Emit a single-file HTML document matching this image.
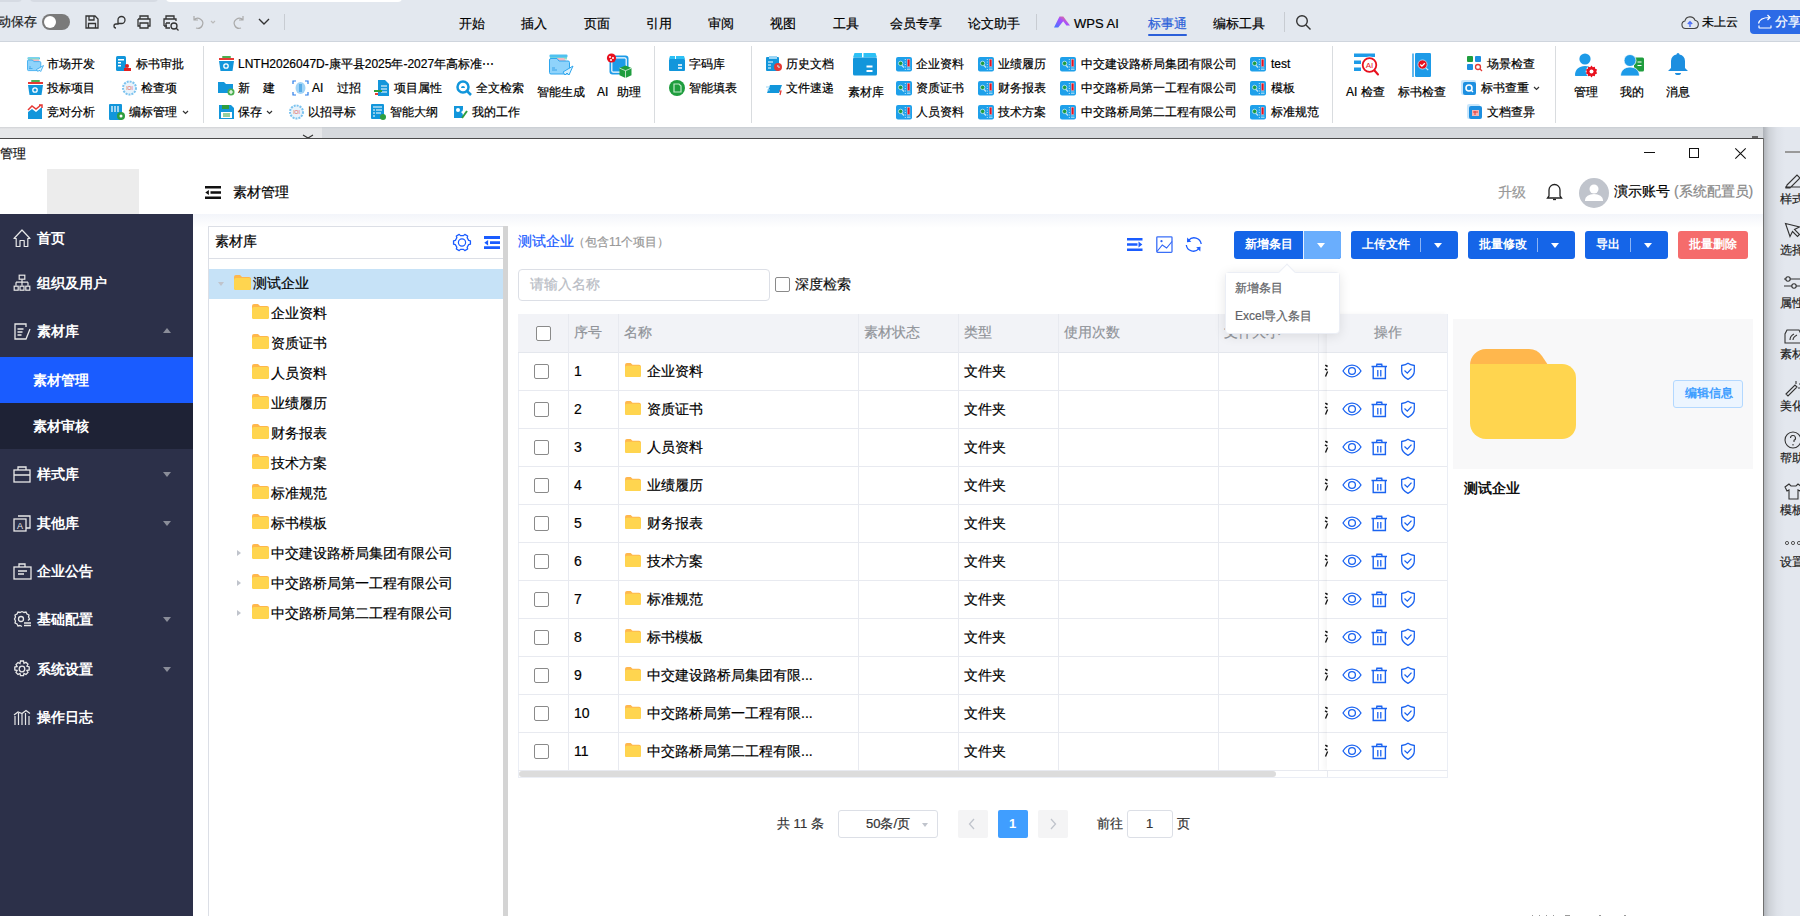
<!DOCTYPE html>
<html><head><meta charset="utf-8">
<style>
*{margin:0;padding:0;box-sizing:border-box}
html,body{width:1800px;height:916px;overflow:hidden;background:#fff;font-family:"Liberation Sans",sans-serif;color:#222}
.a{position:absolute}
.t{position:absolute;white-space:nowrap;line-height:1;-webkit-text-stroke:0.2px currentColor}
svg{overflow:visible}
</style></head><body>
<!-- TOP BAR -->
<div class="a" style="left:0;top:0;width:1800px;height:41px;background:#e3e8ef"></div>
<div class="a" style="left:0;top:41px;width:1800px;height:1px;background:#cfd5dd"></div>
<div class="a" style="left:-10px;top:-8px;width:32px;height:10px;background:#d6dbe3;border-radius:4px"></div>
<div class="a" style="left:30px;top:-8px;width:128px;height:10px;background:#d6dbe3;border-radius:4px"></div>
<div class="a" style="left:166px;top:-8px;width:236px;height:10px;background:#fff;border-radius:4px"></div>
<div class="t" style="left:-2px;top:15px;font-size:13px;color:#222">动保存</div>
<div class="a" style="left:42px;top:14px;width:28px;height:16px;border-radius:8px;background:#7a7a7a"></div>
<div class="a" style="left:44px;top:16px;width:12px;height:12px;border-radius:6px;background:#fff"></div>
<svg class="a" style="left:84px;top:14px" width="16" height="16" viewBox="0 0 16 16" fill="none" stroke="#333" stroke-width="1.3"><path d="M2 2h9l3 3v9H2z M5 2v4h5V2 M4.5 14v-4.5h7V14"/></svg>
<svg class="a" style="left:110px;top:14px" width="16" height="16" viewBox="0 0 16 16" fill="none" stroke="#333" stroke-width="1.3"><path d="M6 14a2 2 0 1 1 0-4h2V6a3.5 3.5 0 1 1 3.5 3.5H8"/></svg>
<svg class="a" style="left:136px;top:14px" width="16" height="16" viewBox="0 0 16 16" fill="none" stroke="#333" stroke-width="1.3"><path d="M4 5V2h8v3 M2 5h12v7h-2 M4 12H2V5 M4 9h8v5H4z"/></svg>
<svg class="a" style="left:162px;top:14px" width="18" height="17" viewBox="0 0 18 17" fill="none" stroke="#333" stroke-width="1.3"><path d="M4 5V2h8v3 M2 12V5h12v2 M2 12h3 M4 9h4 M4 9v5h4"/><circle cx="12" cy="12" r="3"/><path d="M14 14l2.5 2.5"/></svg>
<svg class="a" style="left:191px;top:14px" width="28" height="16" viewBox="0 0 28 16" fill="none" stroke="#aaa" stroke-width="1.2"><path d="M3 2v4h4 M3 6a5 5 0 1 1 2 8"/><path d="M20 7l2 2 2-2" stroke="#bbb"/></svg>
<svg class="a" style="left:231px;top:14px" width="16" height="16" viewBox="0 0 16 16" fill="none" stroke="#aaa" stroke-width="1.2"><path d="M12 2v4H8 M12 6a5 5 0 1 0-2 8"/></svg>
<svg class="a" style="left:257px;top:17px" width="14" height="10" viewBox="0 0 14 10" fill="none" stroke="#333" stroke-width="1.4"><path d="M2 2l5 5 5-5"/></svg>
<div class="a" style="left:284px;top:14px;width:1px;height:16px;background:#c8ccd2"></div>
<div class="t" style="left:459px;top:16.5px;font-size:13px;color:#000">开始</div>
<div class="t" style="left:521px;top:16.5px;font-size:13px;color:#000">插入</div>
<div class="t" style="left:584px;top:16.5px;font-size:13px;color:#000">页面</div>
<div class="t" style="left:646px;top:16.5px;font-size:13px;color:#000">引用</div>
<div class="t" style="left:708px;top:16.5px;font-size:13px;color:#000">审阅</div>
<div class="t" style="left:770px;top:16.5px;font-size:13px;color:#000">视图</div>
<div class="t" style="left:833px;top:16.5px;font-size:13px;color:#000">工具</div>
<div class="t" style="left:890px;top:16.5px;font-size:13px;color:#000">会员专享</div>
<div class="t" style="left:968px;top:16.5px;font-size:13px;color:#000">论文助手</div>
<div class="a" style="left:1036px;top:14px;width:1px;height:16px;background:#c8ccd2"></div>
<svg class="a" style="left:1054px;top:16px" width="17" height="12" viewBox="0 0 17 12"><defs><linearGradient id="wg" x1="0" x2="1" y1="1" y2="0"><stop offset="0" stop-color="#3d7bff"/><stop offset="0.55" stop-color="#a64dff"/><stop offset="1" stop-color="#ff8a5a"/></linearGradient></defs><path d="M0 11.5L5.5 0.5h3.8L16 9.5h-3.6L9.2 5.2 4.2 11.5z" fill="url(#wg)"/></svg>
<div class="t" style="left:1074px;top:16.5px;font-size:13px;color:#000">WPS AI</div>
<div class="t" style="left:1148px;top:16.5px;font-size:13px;color:#2b5fd9">标事通</div>
<div class="a" style="left:1148px;top:34px;width:39px;height:2px;background:#2b5fd9;border-radius:1px"></div>
<div class="t" style="left:1213px;top:16.5px;font-size:13px;color:#000">编标工具</div>
<div class="a" style="left:1284px;top:12px;width:1px;height:20px;background:#c8ccd2"></div>
<svg class="a" style="left:1295px;top:14px" width="17" height="17" viewBox="0 0 17 17" fill="none" stroke="#333" stroke-width="1.4"><circle cx="7" cy="7" r="5.3"/><path d="M11 11l4.5 4.5"/></svg>
<svg class="a" style="left:1681px;top:14px" width="18" height="16" viewBox="0 0 18 16" fill="none"><path d="M5 14.5H4.5a3.8 3.8 0 0 1-.6-7.5A5.3 5.3 0 0 1 14 6.2a4.2 4.2 0 0 1-.6 8.3z" stroke="#444" stroke-width="1.1"/><path d="M9 13V8 M6.8 10l2.2-2.2 2.2 2.2" stroke="#4a6cf7" stroke-width="1.4"/></svg>
<div class="t" style="left:1702px;top:16px;font-size:12px;color:#000">未上云</div>
<div class="a" style="left:1750px;top:10px;width:60px;height:24px;background:#2c6ae6;border-radius:4px"></div>
<svg class="a" style="left:1757px;top:14px" width="16" height="15" viewBox="0 0 16 15" fill="none" stroke="#fff" stroke-width="1.2"><path d="M2 13.5v-2 M14 11.5v2a.5.5 0 0 1-.5.5h-11a.5.5 0 0 1-.5-.5" /><path d="M1.5 9.5C2.5 5 6 3.5 12.5 3.5 M10.5 1l2.5 2.5-2.5 2.5"/></svg>
<div class="t" style="left:1775px;top:15px;font-size:13px;color:#fff">分享</div>

<!-- RIBBON -->
<div class="a" style="left:0;top:42px;width:1800px;height:85px;background:#fff"></div>
<div class="a" style="left:0;top:127px;width:1800px;height:11px;background:linear-gradient(#c9cdd2,#d6d9dd 2px,#d6d9dd)"></div>
<div class="a" style="left:0;top:127px;width:322px;height:11px;background:linear-gradient(#d0d2d5,#e6e7e9 2px,#e6e7e9)"></div>
<svg class="a" style="left:302px;top:134px" width="12" height="5" viewBox="0 0 12 5"><path d="M1 1l5 3 5-3" fill="none" stroke="#333" stroke-width="1.1"/></svg>
<div class="a" style="left:0;top:138px;width:1764px;height:1px;background:#4a4a4a"></div>

<svg class="a" style="left:27px;top:57px" width="17" height="15" viewBox="0 0 17 15"><rect x="0.5" y="0.3" width="12.5" height="2.2" rx="0.8" fill="#4fc1f0"/><path d="M1 1.2h11v1.5H1z" fill="#8fe0c8"/><path d="M2.5 2.5h9l1.5 2H2.5z" fill="#f4b8c0"/><path d="M0.5 4a1 1 0 0 1 1-1h4l1.3 1.6h6a1 1 0 0 1 1 1v7a1 1 0 0 1-1 1h-11.3a1 1 0 0 1-1-1z" fill="#8fd3fb" stroke="#2ea6ee" stroke-width="0.8"/><path d="M2 10h2 M2 11.5h3.5" stroke="#3aa3e8" stroke-width="0.8"/><path d="M9.5 12.5l7-4-2.8 6-1.4-1.4-1.4 1.4z" fill="#d8f0fd" stroke="#2ea6ee" stroke-width="0.8"/></svg>
<div class="t" style="left:47px;top:57.9px;font-size:12px;color:#000;">市场开发</div>
<svg class="a" style="left:115px;top:56px" width="17" height="16" viewBox="0 0 17 16"><rect x="1" y="0" width="10" height="15" rx="1.5" fill="#1296db"/><rect x="3" y="3" width="6" height="1.5" fill="#fff"/><rect x="3" y="6" width="3" height="1.5" fill="#fff"/><rect x="3" y="9" width="3" height="1.5" fill="#fff"/><circle cx="12" cy="10" r="2" fill="#e02020"/><rect x="9" y="12" width="7" height="3" fill="#e02020"/></svg>
<div class="t" style="left:136px;top:57.9px;font-size:12px;color:#000;">标书审批</div>
<svg class="a" style="left:27px;top:80px" width="17" height="16" viewBox="0 0 17 16"><rect x="4" y="0" width="9" height="2" rx="1" fill="#4caf50"/><rect x="1" y="2" width="15" height="2" fill="#e53935"/><path d="M1 5h15l-1.5 10h-12z" fill="#1296db"/><circle cx="8" cy="10" r="2.2" fill="none" stroke="#fff" stroke-width="1.3"/></svg>
<div class="t" style="left:47px;top:81.9px;font-size:12px;color:#000;">投标项目</div>
<svg class="a" style="left:121px;top:80px" width="17" height="16" viewBox="0 0 17 16"><circle cx="8.5" cy="8" r="6.5" fill="#e8f3fb" stroke="#7cc3ef" stroke-width="2" stroke-dasharray="2 1"/><text x="8.5" y="10" font-size="5" fill="#e05050" text-anchor="middle" font-family="Liberation Sans">IOI</text></svg>
<div class="t" style="left:141px;top:81.9px;font-size:12px;color:#000;">检查项</div>
<svg class="a" style="left:27px;top:104px" width="17" height="16" viewBox="0 0 17 16"><path d="M1 15V8l4-3 4 3 6-5v12z" fill="#1296db"/><path d="M1 6l4-4 4 3 5-4 M12 1h3v3" fill="none" stroke="#e53935" stroke-width="1.5"/></svg>
<div class="t" style="left:47px;top:105.9px;font-size:12px;color:#000;">竞对分析</div>
<svg class="a" style="left:109px;top:104px" width="17" height="17" viewBox="0 0 17 17"><rect x="0" y="0" width="13" height="16" rx="1" fill="#1296db"/><path d="M3 2v6 M6 2v6 M9 2v6" stroke="#fff" stroke-width="1.2"/><circle cx="12" cy="12" r="4" fill="#2e9e3e"/><circle cx="12" cy="12" r="1.5" fill="#fff"/></svg>
<div class="t" style="left:129px;top:105.9px;font-size:12px;color:#000;">编标管理</div>
<svg class="a" style="left:182px;top:110px" width="7" height="5" viewBox="0 0 7 5"><path d="M1 1l2.5 2.5L6 1" fill="none" stroke="#333" stroke-width="1.2"/></svg>
<div class="a" style="left:203px;top:46px;width:1px;height:77px;background:#d9dcdf"></div>
<svg class="a" style="left:218px;top:56px" width="17" height="16" viewBox="0 0 17 16"><rect x="4" y="0" width="9" height="2" rx="1" fill="#4caf50"/><rect x="1" y="2" width="15" height="2" fill="#e53935"/><path d="M1 5h15l-1.5 10h-12z" fill="#1296db"/><circle cx="8" cy="10" r="2.2" fill="none" stroke="#fff" stroke-width="1.3"/></svg>
<div class="t" style="left:238px;top:57.9px;font-size:12px;color:#000;">LNTH2026047D-康平县2025年-2027年高标准⋯</div>
<svg class="a" style="left:218px;top:80px" width="17" height="16" viewBox="0 0 17 16"><path d="M0 2h6l2 2h7v9H0z" fill="#1296db"/><circle cx="13" cy="12" r="3.5" fill="#4caf50"/><path d="M13 10v4 M11 12h4" stroke="#fff" stroke-width="1.2"/></svg>
<div class="t" style="left:238px;top:81.9px;font-size:12px;color:#000;">新&nbsp;&nbsp;&nbsp;&nbsp;建</div>
<svg class="a" style="left:292px;top:80px" width="17" height="16" viewBox="0 0 17 16"><path d="M1 4V1h3 M13 1h3v3 M16 12v3h-3 M4 15H1v-3" fill="none" stroke="#2b7de9" stroke-width="1.2"/><ellipse cx="8.5" cy="8" rx="5" ry="6" fill="#9fd3f7"/><rect x="7" y="4" width="3" height="8" fill="#5aaee8"/></svg>
<div class="t" style="left:312px;top:81.9px;font-size:12px;color:#000;">AI&nbsp;&nbsp;&nbsp;&nbsp;过招</div>
<svg class="a" style="left:374px;top:80px" width="17" height="16" viewBox="0 0 17 16"><path d="M4 0h7l4 4v12H4z" fill="#1296db"/><path d="M7 6h6 M7 9h6 M7 12h6" stroke="#fff" stroke-width="1.2"/><rect x="0" y="10" width="8" height="2" fill="#2e9e3e"/><rect x="1" y="13" width="3" height="2" fill="#e53935"/></svg>
<div class="t" style="left:394px;top:81.9px;font-size:12px;color:#000;">项目属性</div>
<svg class="a" style="left:456px;top:80px" width="17" height="16" viewBox="0 0 17 16"><circle cx="7" cy="7" r="5.5" fill="#fff" stroke="#1296db" stroke-width="2.5"/><path d="M5 8a2 2 0 0 1 4 0z" fill="#1296db"/><path d="M11 11l4 4" stroke="#1296db" stroke-width="2.5"/></svg>
<div class="t" style="left:476px;top:81.9px;font-size:12px;color:#000;">全文检索</div>
<svg class="a" style="left:218px;top:104px" width="17" height="16" viewBox="0 0 17 16"><path d="M1 1h12l3 3v11H1z" fill="#1296db"/><rect x="4" y="1" width="7" height="4" fill="#2e9e3e"/><rect x="3" y="8" width="11" height="6" fill="#fff"/><path d="M5 10h7 M5 12h7" stroke="#2e9e3e" stroke-width="1"/></svg>
<div class="t" style="left:238px;top:105.9px;font-size:12px;color:#000;">保存</div>
<svg class="a" style="left:266px;top:110px" width="7" height="5" viewBox="0 0 7 5"><path d="M1 1l2.5 2.5L6 1" fill="none" stroke="#333" stroke-width="1.2"/></svg>
<svg class="a" style="left:288px;top:104px" width="17" height="16" viewBox="0 0 17 16"><circle cx="8.5" cy="8" r="6.5" fill="#e8f3fb" stroke="#7cc3ef" stroke-width="2" stroke-dasharray="2 1"/><text x="8.5" y="10" font-size="5" fill="#e05050" text-anchor="middle" font-family="Liberation Sans">IOI</text></svg>
<div class="t" style="left:308px;top:105.9px;font-size:12px;color:#000;">以招寻标</div>
<svg class="a" style="left:370px;top:104px" width="17" height="16" viewBox="0 0 17 16"><rect x="1" y="0" width="13" height="15" rx="1" fill="#1296db"/><path d="M3 3h9 M3 6h2 M6 6h6 M3 9h2 M6 9h5 M3 12h2" stroke="#fff" stroke-width="1.2"/><circle cx="13" cy="13" r="3" fill="#2e9e3e"/></svg>
<div class="t" style="left:390px;top:105.9px;font-size:12px;color:#000;">智能大纲</div>
<svg class="a" style="left:452px;top:104px" width="17" height="16" viewBox="0 0 17 16"><path d="M2 2h9v3a3 3 0 0 1-2 3 4 4 0 0 1 2 4v2H2z" fill="#1296db"/><circle cx="6" cy="6" r="2" fill="#fff"/><path d="M10 14l5-7" stroke="#2e9e3e" stroke-width="2"/></svg>
<div class="t" style="left:472px;top:105.9px;font-size:12px;color:#000;">我的工作</div>
<svg class="a" style="left:549px;top:54px" width="25" height="23" viewBox="0 0 25 23"><path d="M1 1.5h17v4H1z" fill="#8fe0c8"/><rect x="0.5" y="0.5" width="18" height="3" rx="1" fill="#4fc1f0"/><path d="M3 4h12l2 3H3z" fill="#f4b8c0"/><path d="M0.5 6a1.5 1.5 0 0 1 1.5-1.5h6l2 2.5h9a1.5 1.5 0 0 1 1.5 1.5v10a1.5 1.5 0 0 1-1.5 1.5H2A1.5 1.5 0 0 1 .5 18.5z" fill="#8fd3fb" stroke="#2ea6ee" stroke-width="1"/><path d="M3 14h3 M3 16h5" stroke="#3aa3e8" stroke-width="1"/><path d="M14 18l10-6-4 9-2-2-2 2z" fill="#d8f0fd" stroke="#2ea6ee" stroke-width="1"/></svg>
<div class="t" style="left:537px;top:85.9px;font-size:12px;color:#000;">智能生成</div>
<svg class="a" style="left:606px;top:53px" width="26" height="25" viewBox="0 0 26 25"><rect x="3.5" y="2.5" width="19" height="19" rx="3" fill="#1d9be8"/><rect x="5.8" y="4.8" width="14.4" height="14.4" rx="1.5" fill="none" stroke="#fff" stroke-width="1.2"/><circle cx="5.5" cy="5" r="4.6" fill="#e8101e"/><circle cx="4" cy="4" r="1" fill="#fff"/><circle cx="7" cy="5" r="1" fill="#fff"/><circle cx="5" cy="7" r="1" fill="#fff"/><path d="M19.5 12.5l6 2.6v7.2l-6 2.7-6-2.7v-7.2z" fill="#1f9d3e"/><path d="M13.5 15.1l6 2.6 6-2.6 M19.5 17.7v7.3" stroke="#fff" stroke-width="0.7" fill="none"/></svg>
<div class="t" style="left:597px;top:85.9px;font-size:12px;color:#000;">AI</div>
<div class="t" style="left:617px;top:85.9px;font-size:12px;color:#000;">助理</div>
<div class="a" style="left:654px;top:46px;width:1px;height:77px;background:#d9dcdf"></div>
<svg class="a" style="left:669px;top:56px" width="16" height="16" viewBox="0 0 16 16"><path d="M0 3l1-3h5v3z M7 3V0h8l1 3z" fill="#2cc0f5"/><rect x="0" y="3" width="16" height="12" rx="1" fill="#1296db"/><path d="M9 9h4 M9 12h4" stroke="#fff" stroke-width="1.3"/></svg>
<div class="t" style="left:689px;top:57.9px;font-size:12px;color:#000;">字码库</div>
<svg class="a" style="left:669px;top:80px" width="17" height="16" viewBox="0 0 17 16"><circle cx="8" cy="8" r="8" fill="#1f9d3e"/><path d="M5 4h5l2 2v6H5z" fill="none" stroke="#bfe9c8" stroke-width="1.2"/></svg>
<div class="t" style="left:689px;top:81.9px;font-size:12px;color:#000;">智能填表</div>
<div class="a" style="left:751px;top:46px;width:1px;height:77px;background:#d9dcdf"></div>
<svg class="a" style="left:766px;top:56px" width="17" height="16" viewBox="0 0 17 16"><rect x="0" y="1" width="13" height="14" rx="1" fill="#1296db"/><rect x="3" y="0" width="8" height="3" fill="#9ad5f5"/><path d="M2 6h5 M2 9h3 M2 12h3" stroke="#fff" stroke-width="1.2"/><circle cx="12" cy="11" r="4" fill="#e53935"/><path d="M12 9v2h2" stroke="#fff" stroke-width="1"/></svg>
<div class="t" style="left:786px;top:57.9px;font-size:12px;color:#000;">历史文档</div>
<svg class="a" style="left:766px;top:80px" width="17" height="16" viewBox="0 0 17 16"><path d="M4 5h12l-3 8H1z" fill="#1296db"/><path d="M0 7h4 M1 10h3" stroke="#9ad5f5" stroke-width="1"/><path d="M13 11l2 0-1 4" stroke="#e53935" stroke-width="1.2" fill="none"/></svg>
<div class="t" style="left:786px;top:81.9px;font-size:12px;color:#000;">文件速递</div>
<svg class="a" style="left:853px;top:53px" width="24" height="24" viewBox="0 0 16 16"><path d="M0 3l1-3h5v3z M7 3V0h8l1 3z" fill="#2cc0f5"/><rect x="0" y="3" width="16" height="12" rx="1" fill="#1296db"/><path d="M9 9h4 M9 12h4" stroke="#fff" stroke-width="1.2"/></svg>
<div class="t" style="left:848px;top:85.9px;font-size:12px;color:#000;">素材库</div>
<svg class="a" style="left:896px;top:56.5px" width="17" height="15" viewBox="0 0 17 15"><rect x="0" y="0" width="16" height="14.5" rx="2" fill="#1ea0ea"/><path d="M5.5 8l2.5 2.5" stroke="#bfe6f7" stroke-width="1.3"/><circle cx="4.6" cy="6.4" r="2.2" fill="#1f9d3e" stroke="#bfe6f7" stroke-width="0.8"/><path d="M9.3 2v1 M9.3 4.5v1 M9.3 7v1 M9.3 9.5v1 M9.3 12v1" stroke="#d7f0fb" stroke-width="0.9"/><rect x="11.3" y="2.2" width="2.6" height="7.3" fill="#e8101e" stroke="#f6c3c6" stroke-width="0.5"/><path d="M11 11h3.5 M11 12.5h3.5" stroke="#bfe6f7" stroke-width="0.7"/></svg>
<div class="t" style="left:916px;top:57.9px;font-size:12px;color:#000;">企业资料</div>
<svg class="a" style="left:896px;top:80.5px" width="17" height="15" viewBox="0 0 17 15"><rect x="0" y="0" width="16" height="14.5" rx="2" fill="#1ea0ea"/><path d="M5.5 8l2.5 2.5" stroke="#bfe6f7" stroke-width="1.3"/><circle cx="4.6" cy="6.4" r="2.2" fill="#1f9d3e" stroke="#bfe6f7" stroke-width="0.8"/><path d="M9.3 2v1 M9.3 4.5v1 M9.3 7v1 M9.3 9.5v1 M9.3 12v1" stroke="#d7f0fb" stroke-width="0.9"/><rect x="11.3" y="2.2" width="2.6" height="7.3" fill="#e8101e" stroke="#f6c3c6" stroke-width="0.5"/><path d="M11 11h3.5 M11 12.5h3.5" stroke="#bfe6f7" stroke-width="0.7"/></svg>
<div class="t" style="left:916px;top:81.9px;font-size:12px;color:#000;">资质证书</div>
<svg class="a" style="left:896px;top:104.5px" width="17" height="15" viewBox="0 0 17 15"><rect x="0" y="0" width="16" height="14.5" rx="2" fill="#1ea0ea"/><path d="M5.5 8l2.5 2.5" stroke="#bfe6f7" stroke-width="1.3"/><circle cx="4.6" cy="6.4" r="2.2" fill="#1f9d3e" stroke="#bfe6f7" stroke-width="0.8"/><path d="M9.3 2v1 M9.3 4.5v1 M9.3 7v1 M9.3 9.5v1 M9.3 12v1" stroke="#d7f0fb" stroke-width="0.9"/><rect x="11.3" y="2.2" width="2.6" height="7.3" fill="#e8101e" stroke="#f6c3c6" stroke-width="0.5"/><path d="M11 11h3.5 M11 12.5h3.5" stroke="#bfe6f7" stroke-width="0.7"/></svg>
<div class="t" style="left:916px;top:105.9px;font-size:12px;color:#000;">人员资料</div>
<svg class="a" style="left:978px;top:56.5px" width="17" height="15" viewBox="0 0 17 15"><rect x="0" y="0" width="16" height="14.5" rx="2" fill="#1ea0ea"/><path d="M5.5 8l2.5 2.5" stroke="#bfe6f7" stroke-width="1.3"/><circle cx="4.6" cy="6.4" r="2.2" fill="#1f9d3e" stroke="#bfe6f7" stroke-width="0.8"/><path d="M9.3 2v1 M9.3 4.5v1 M9.3 7v1 M9.3 9.5v1 M9.3 12v1" stroke="#d7f0fb" stroke-width="0.9"/><rect x="11.3" y="2.2" width="2.6" height="7.3" fill="#e8101e" stroke="#f6c3c6" stroke-width="0.5"/><path d="M11 11h3.5 M11 12.5h3.5" stroke="#bfe6f7" stroke-width="0.7"/></svg>
<div class="t" style="left:998px;top:57.9px;font-size:12px;color:#000;">业绩履历</div>
<svg class="a" style="left:978px;top:80.5px" width="17" height="15" viewBox="0 0 17 15"><rect x="0" y="0" width="16" height="14.5" rx="2" fill="#1ea0ea"/><path d="M5.5 8l2.5 2.5" stroke="#bfe6f7" stroke-width="1.3"/><circle cx="4.6" cy="6.4" r="2.2" fill="#1f9d3e" stroke="#bfe6f7" stroke-width="0.8"/><path d="M9.3 2v1 M9.3 4.5v1 M9.3 7v1 M9.3 9.5v1 M9.3 12v1" stroke="#d7f0fb" stroke-width="0.9"/><rect x="11.3" y="2.2" width="2.6" height="7.3" fill="#e8101e" stroke="#f6c3c6" stroke-width="0.5"/><path d="M11 11h3.5 M11 12.5h3.5" stroke="#bfe6f7" stroke-width="0.7"/></svg>
<div class="t" style="left:998px;top:81.9px;font-size:12px;color:#000;">财务报表</div>
<svg class="a" style="left:978px;top:104.5px" width="17" height="15" viewBox="0 0 17 15"><rect x="0" y="0" width="16" height="14.5" rx="2" fill="#1ea0ea"/><path d="M5.5 8l2.5 2.5" stroke="#bfe6f7" stroke-width="1.3"/><circle cx="4.6" cy="6.4" r="2.2" fill="#1f9d3e" stroke="#bfe6f7" stroke-width="0.8"/><path d="M9.3 2v1 M9.3 4.5v1 M9.3 7v1 M9.3 9.5v1 M9.3 12v1" stroke="#d7f0fb" stroke-width="0.9"/><rect x="11.3" y="2.2" width="2.6" height="7.3" fill="#e8101e" stroke="#f6c3c6" stroke-width="0.5"/><path d="M11 11h3.5 M11 12.5h3.5" stroke="#bfe6f7" stroke-width="0.7"/></svg>
<div class="t" style="left:998px;top:105.9px;font-size:12px;color:#000;">技术方案</div>
<svg class="a" style="left:1060px;top:56.5px" width="17" height="15" viewBox="0 0 17 15"><rect x="0" y="0" width="16" height="14.5" rx="2" fill="#1ea0ea"/><path d="M5.5 8l2.5 2.5" stroke="#bfe6f7" stroke-width="1.3"/><circle cx="4.6" cy="6.4" r="2.2" fill="#1f9d3e" stroke="#bfe6f7" stroke-width="0.8"/><path d="M9.3 2v1 M9.3 4.5v1 M9.3 7v1 M9.3 9.5v1 M9.3 12v1" stroke="#d7f0fb" stroke-width="0.9"/><rect x="11.3" y="2.2" width="2.6" height="7.3" fill="#e8101e" stroke="#f6c3c6" stroke-width="0.5"/><path d="M11 11h3.5 M11 12.5h3.5" stroke="#bfe6f7" stroke-width="0.7"/></svg>
<div class="t" style="left:1081px;top:57.9px;font-size:12px;color:#000;">中交建设路桥局集团有限公司</div>
<svg class="a" style="left:1060px;top:80.5px" width="17" height="15" viewBox="0 0 17 15"><rect x="0" y="0" width="16" height="14.5" rx="2" fill="#1ea0ea"/><path d="M5.5 8l2.5 2.5" stroke="#bfe6f7" stroke-width="1.3"/><circle cx="4.6" cy="6.4" r="2.2" fill="#1f9d3e" stroke="#bfe6f7" stroke-width="0.8"/><path d="M9.3 2v1 M9.3 4.5v1 M9.3 7v1 M9.3 9.5v1 M9.3 12v1" stroke="#d7f0fb" stroke-width="0.9"/><rect x="11.3" y="2.2" width="2.6" height="7.3" fill="#e8101e" stroke="#f6c3c6" stroke-width="0.5"/><path d="M11 11h3.5 M11 12.5h3.5" stroke="#bfe6f7" stroke-width="0.7"/></svg>
<div class="t" style="left:1081px;top:81.9px;font-size:12px;color:#000;">中交路桥局第一工程有限公司</div>
<svg class="a" style="left:1060px;top:104.5px" width="17" height="15" viewBox="0 0 17 15"><rect x="0" y="0" width="16" height="14.5" rx="2" fill="#1ea0ea"/><path d="M5.5 8l2.5 2.5" stroke="#bfe6f7" stroke-width="1.3"/><circle cx="4.6" cy="6.4" r="2.2" fill="#1f9d3e" stroke="#bfe6f7" stroke-width="0.8"/><path d="M9.3 2v1 M9.3 4.5v1 M9.3 7v1 M9.3 9.5v1 M9.3 12v1" stroke="#d7f0fb" stroke-width="0.9"/><rect x="11.3" y="2.2" width="2.6" height="7.3" fill="#e8101e" stroke="#f6c3c6" stroke-width="0.5"/><path d="M11 11h3.5 M11 12.5h3.5" stroke="#bfe6f7" stroke-width="0.7"/></svg>
<div class="t" style="left:1081px;top:105.9px;font-size:12px;color:#000;">中交路桥局第二工程有限公司</div>
<svg class="a" style="left:1250px;top:56.5px" width="17" height="15" viewBox="0 0 17 15"><rect x="0" y="0" width="16" height="14.5" rx="2" fill="#1ea0ea"/><path d="M5.5 8l2.5 2.5" stroke="#bfe6f7" stroke-width="1.3"/><circle cx="4.6" cy="6.4" r="2.2" fill="#1f9d3e" stroke="#bfe6f7" stroke-width="0.8"/><path d="M9.3 2v1 M9.3 4.5v1 M9.3 7v1 M9.3 9.5v1 M9.3 12v1" stroke="#d7f0fb" stroke-width="0.9"/><rect x="11.3" y="2.2" width="2.6" height="7.3" fill="#e8101e" stroke="#f6c3c6" stroke-width="0.5"/><path d="M11 11h3.5 M11 12.5h3.5" stroke="#bfe6f7" stroke-width="0.7"/></svg>
<div class="t" style="left:1271px;top:57.9px;font-size:12px;color:#000;">test</div>
<svg class="a" style="left:1250px;top:80.5px" width="17" height="15" viewBox="0 0 17 15"><rect x="0" y="0" width="16" height="14.5" rx="2" fill="#1ea0ea"/><path d="M5.5 8l2.5 2.5" stroke="#bfe6f7" stroke-width="1.3"/><circle cx="4.6" cy="6.4" r="2.2" fill="#1f9d3e" stroke="#bfe6f7" stroke-width="0.8"/><path d="M9.3 2v1 M9.3 4.5v1 M9.3 7v1 M9.3 9.5v1 M9.3 12v1" stroke="#d7f0fb" stroke-width="0.9"/><rect x="11.3" y="2.2" width="2.6" height="7.3" fill="#e8101e" stroke="#f6c3c6" stroke-width="0.5"/><path d="M11 11h3.5 M11 12.5h3.5" stroke="#bfe6f7" stroke-width="0.7"/></svg>
<div class="t" style="left:1271px;top:81.9px;font-size:12px;color:#000;">模板</div>
<svg class="a" style="left:1250px;top:104.5px" width="17" height="15" viewBox="0 0 17 15"><rect x="0" y="0" width="16" height="14.5" rx="2" fill="#1ea0ea"/><path d="M5.5 8l2.5 2.5" stroke="#bfe6f7" stroke-width="1.3"/><circle cx="4.6" cy="6.4" r="2.2" fill="#1f9d3e" stroke="#bfe6f7" stroke-width="0.8"/><path d="M9.3 2v1 M9.3 4.5v1 M9.3 7v1 M9.3 9.5v1 M9.3 12v1" stroke="#d7f0fb" stroke-width="0.9"/><rect x="11.3" y="2.2" width="2.6" height="7.3" fill="#e8101e" stroke="#f6c3c6" stroke-width="0.5"/><path d="M11 11h3.5 M11 12.5h3.5" stroke="#bfe6f7" stroke-width="0.7"/></svg>
<div class="t" style="left:1271px;top:105.9px;font-size:12px;color:#000;">标准规范</div>
<div class="a" style="left:1332px;top:46px;width:1px;height:77px;background:#d9dcdf"></div>
<svg class="a" style="left:1353px;top:53px" width="26" height="24" viewBox="0 0 26 24"><path d="M1 0.5h21v3.5H1z M1 7.5h7v3.5H1z M1 14.5h7v3.5H1z" fill="#1d9be8"/><circle cx="16.5" cy="12" r="8.5" fill="#fff"/><circle cx="16.5" cy="12" r="6.8" fill="#fff" stroke="#e8101e" stroke-width="1.8"/><text x="16.5" y="15" font-size="8" fill="#e8101e" text-anchor="middle" font-family="Liberation Sans">AI</text><path d="M21.5 17.5l3.5 4" stroke="#e8101e" stroke-width="2" stroke-linecap="round"/></svg>
<div class="t" style="left:1346px;top:85.9px;font-size:12px;color:#000;">AI&nbsp;检查</div>
<svg class="a" style="left:1412px;top:53px" width="20" height="25" viewBox="0 0 20 25"><rect x="0.3" y="0.5" width="1.4" height="23.5" fill="#1d9be8"/><rect x="3" y="0" width="16" height="24" rx="1.2" fill="#1d9be8"/><circle cx="10.5" cy="11.5" r="4.6" fill="#e8101e" stroke="#bfe3f7" stroke-width="0.8"/><path d="M8.3 11.5l1.6 1.6 2.9-2.9" stroke="#fff" stroke-width="1.3" fill="none"/><path d="M13.8 14.8l2.4 2.4" stroke="#d7f0fb" stroke-width="1.2"/></svg>
<div class="t" style="left:1398px;top:85.9px;font-size:12px;color:#000;">标书检查</div>
<svg class="a" style="left:1467px;top:56px" width="16" height="16" viewBox="0 0 16 16"><rect x="0" y="0" width="6" height="6" rx="1" fill="#1f9d3e"/><rect x="8" y="0" width="6" height="6" rx="1" fill="#1d8fe0"/><rect x="0" y="8" width="6" height="6" rx="1" fill="#1d8fe0"/><circle cx="11" cy="11" r="2.5" fill="none" stroke="#e53935" stroke-width="1.3"/><path d="M13 13l2 2" stroke="#e53935" stroke-width="1.3"/></svg>
<div class="t" style="left:1487px;top:57.9px;font-size:12px;color:#000;">场景检查</div>
<svg class="a" style="left:1461px;top:80px" width="16" height="16" viewBox="0 0 16 16"><rect x="0" y="0" width="15" height="15" rx="2" fill="#c9e6fb"/><rect x="2" y="2" width="13" height="13" rx="2" fill="#1d8fe0"/><circle cx="8" cy="8" r="3" fill="none" stroke="#fff" stroke-width="1.6"/><path d="M10 10l2 2" stroke="#fff" stroke-width="1.5"/></svg>
<div class="t" style="left:1481px;top:81.9px;font-size:12px;color:#000;">标书查重</div>
<svg class="a" style="left:1533px;top:86px" width="7" height="5" viewBox="0 0 7 5"><path d="M1 1l2.5 2.5L6 1" fill="none" stroke="#333" stroke-width="1.2"/></svg>
<svg class="a" style="left:1467px;top:104px" width="16" height="16" viewBox="0 0 16 16"><rect x="0" y="0" width="13" height="15" rx="2" fill="#c9e6fb"/><rect x="2" y="2" width="13" height="13" rx="2" fill="#1d8fe0"/><rect x="5" y="6" width="7" height="6" fill="#f3b4b4"/><path d="M6 8h5 M8 7v4" stroke="#e53935" stroke-width="1"/></svg>
<div class="t" style="left:1487px;top:105.9px;font-size:12px;color:#000;">文档查异</div>
<div class="a" style="left:1555px;top:46px;width:1px;height:77px;background:#d9dcdf"></div>
<svg class="a" style="left:1574px;top:52px" width="26" height="26" viewBox="0 0 26 26"><circle cx="11" cy="7" r="5.6" fill="#1d9be8"/><path d="M1 23.5c0-6 4-9.5 10-9.5 3 0 5 .8 6.5 2.2V24H2.5A1.5 1.5 0 0 1 1 23.5z" fill="#1d9be8"/><circle cx="17.5" cy="19.5" r="5.8" fill="#fff"/><path d="M17.5 13.6l1.3 1.6 2-.4.4 2 1.9.8-.8 1.9.8 1.9-1.9.8-.4 2-2-.4-1.3 1.6-1.3-1.6-2 .4-.4-2-1.9-.8.8-1.9-.8-1.9 1.9-.8.4-2 2 .4z" fill="#e8101e"/><circle cx="17.5" cy="19.5" r="2" fill="#fff"/></svg>
<div class="t" style="left:1574px;top:85.9px;font-size:12px;color:#000;">管理</div>
<svg class="a" style="left:1620px;top:52px" width="26" height="26" viewBox="0 0 26 26"><rect x="14" y="5.5" width="10" height="14" rx="1.5" fill="#1f9d3e"/><path d="M17.5 10h4 M17.5 13.5h4" stroke="#fff" stroke-width="1.1"/><circle cx="10" cy="8.5" r="6" fill="#1d9be8" stroke="#fff" stroke-width="0.8"/><path d="M0.5 24c0-5.5 4-9 9.5-9s9.5 3.5 9.5 9z" fill="#1d9be8" stroke="#fff" stroke-width="0.8"/></svg>
<div class="t" style="left:1620px;top:85.9px;font-size:12px;color:#000;">我的</div>
<svg class="a" style="left:1667px;top:52px" width="22" height="24" viewBox="0 0 22 24"><path d="M11 1a1.5 1.5 0 0 1 1.5 1.5A7 7 0 0 1 18 9v7l3 3H1l3-3V9a7 7 0 0 1 5.5-6.5A1.5 1.5 0 0 1 11 1z" fill="#1d8fe0"/><path d="M8 21a3 2 0 0 0 6 0z" fill="#1d8fe0"/></svg>
<div class="t" style="left:1666px;top:85.9px;font-size:12px;color:#000;">消息</div>
<div class="a" style="left:0px;top:139px;width:1763px;height:777px;background:#fff"></div>
<div class="t" style="left:0px;top:146.8px;font-size:13px;color:#111;">管理</div>
<div class="a" style="left:1644px;top:152px;width:11px;height:1px;background:#111"></div>
<div class="a" style="left:1689px;top:148px;width:10px;height:10px;border:1px solid #111"></div>
<svg class="a" style="left:1734px;top:147px" width="13" height="13" viewBox="0 0 13 13"><path d="M1.3 1.3l10.4 10.4 M11.7 1.3L1.3 11.7" stroke="#111" stroke-width="1.1"/></svg>
<div class="a" style="left:47px;top:169px;width:92px;height:45px;background:#ececec"></div>
<svg class="a" style="left:205px;top:186px" width="16" height="14" viewBox="0 0 16 14"><path d="M0 1.3h16 M5.5 6.5h10.5 M0 11.7h16" stroke="#111" stroke-width="2.6"/><path d="M0.3 6.5l3.6-2.6v5.2z" fill="#111"/></svg>
<div class="t" style="left:233px;top:184.8px;font-size:14px;color:#000;">素材管理</div>
<div class="t" style="left:1498px;top:185.3px;font-size:14px;color:#999;">升级</div>
<svg class="a" style="left:1546px;top:183px" width="17" height="18" viewBox="0 0 17 18"><path d="M8.5 1.5a5.5 5.5 0 0 0-5.5 5.5v6l-1.5 2h14l-1.5-2V7a5.5 5.5 0 0 0-5.5-5.5z" fill="none" stroke="#222" stroke-width="1.3"/><path d="M7 16.5h3" stroke="#222" stroke-width="1.3"/></svg>
<svg class="a" style="left:1579px;top:178px" width="30" height="30" viewBox="0 0 30 30"><circle cx="15" cy="15" r="15" fill="#c0c4cc"/><circle cx="15" cy="11" r="4.5" fill="#fff"/><path d="M6 22a9 6 0 0 1 18 0v1H6z" fill="#fff"/></svg>
<div class="t" style="left:1614px;top:184.3px;font-size:14px;color:#000">演示账号 <span style="color:#888">(系统配置员)</span></div>
<div class="a" style="left:0px;top:214px;width:193px;height:702px;background:#2c3049"></div>
<div class="a" style="left:0px;top:357px;width:193px;height:46px;background:#1a5cff"></div>
<div class="a" style="left:0px;top:403px;width:193px;height:46px;background:#1e2235"></div>
<svg class="a" style="left:13px;top:229px" width="19" height="19" viewBox="0 0 19 19"><path d="M1 9.5L9 1l8 8.5h-2.2V17.5h-3.6V11.5H7V17.5H3.2V9.5z" fill="none" stroke="#e8e8e8" stroke-width="1.2" stroke-linejoin="round"/></svg>
<div class="t" style="left:37px;top:231.3px;font-size:14px;color:#fff;font-weight:bold;-webkit-text-stroke:0">首页</div>
<svg class="a" style="left:13px;top:274px" width="19" height="19" viewBox="0 0 19 19"><rect x="6.2" y="1.2" width="5.6" height="4" fill="none" stroke="#e8e8e8" stroke-width="1.2"/><path d="M9 5.2v3 M3 8.2h12 M3 8.2v3.5 M9 8.2v3.5 M15 8.2v3.5" fill="none" stroke="#e8e8e8" stroke-width="1.2"/><rect x="1.2" y="12.2" width="4" height="4" fill="none" stroke="#e8e8e8" stroke-width="1.2"/><rect x="7" y="12.2" width="4" height="4" fill="none" stroke="#e8e8e8" stroke-width="1.2"/><rect x="12.8" y="12.2" width="4" height="4" fill="none" stroke="#e8e8e8" stroke-width="1.2"/></svg>
<div class="t" style="left:37px;top:276.3px;font-size:14px;color:#fff;font-weight:bold;-webkit-text-stroke:0">组织及用户</div>
<svg class="a" style="left:13px;top:322px" width="19" height="19" viewBox="0 0 19 19"><path d="M13 5V2H2v15h11l4-10" fill="none" stroke="#e8e8e8" stroke-width="1.3"/><path d="M4.5 7h6 M4.5 10h5 M4.5 13h4" stroke="#e8e8e8" stroke-width="1.3"/></svg>
<div class="t" style="left:37px;top:324.3px;font-size:14px;color:#fff;font-weight:bold;-webkit-text-stroke:0">素材库</div>
<div class="a" style="left:163px;top:328px;width:0;height:0;border-left:4px solid transparent;border-right:4px solid transparent;border-bottom:5px solid #8a8d99"></div>
<svg class="a" style="left:13px;top:465px" width="19" height="19" viewBox="0 0 19 19"><rect x="1" y="5" width="16" height="12" fill="none" stroke="#e8e8e8" stroke-width="1.3"/><path d="M5 5V2h8v3 M1 10h16" fill="none" stroke="#e8e8e8" stroke-width="1.3"/></svg>
<div class="t" style="left:37px;top:467.3px;font-size:14px;color:#fff;font-weight:bold;-webkit-text-stroke:0">样式库</div>
<div class="a" style="left:163px;top:472px;width:0;height:0;border-left:4px solid transparent;border-right:4px solid transparent;border-top:5px solid #8a8d99"></div>
<svg class="a" style="left:13px;top:514px" width="19" height="19" viewBox="0 0 19 19"><rect x="1" y="5" width="12" height="12" fill="none" stroke="#e8e8e8" stroke-width="1.3"/><path d="M5 2h12v12h-4" fill="none" stroke="#e8e8e8" stroke-width="1.3"/><text x="4" y="14.5" font-size="9" fill="#e8e8e8" font-family="Liberation Sans">A</text></svg>
<div class="t" style="left:37px;top:516.3px;font-size:14px;color:#fff;font-weight:bold;-webkit-text-stroke:0">其他库</div>
<div class="a" style="left:163px;top:521px;width:0;height:0;border-left:4px solid transparent;border-right:4px solid transparent;border-top:5px solid #8a8d99"></div>
<svg class="a" style="left:13px;top:562px" width="19" height="19" viewBox="0 0 19 19"><rect x="1" y="5" width="17" height="12" fill="none" stroke="#e8e8e8" stroke-width="1.3"/><path d="M6 5V2h6v3 M5 9h9 M5 12h6" fill="none" stroke="#e8e8e8" stroke-width="1.3"/></svg>
<div class="t" style="left:37px;top:564.3px;font-size:14px;color:#fff;font-weight:bold;-webkit-text-stroke:0">企业公告</div>
<svg class="a" style="left:13px;top:610px" width="19" height="19" viewBox="0 0 19 19"><path d="M9 1.5l2 1 2-.5 1 2 2 1-.5 2 1 2-1.5 1.5" fill="none" stroke="#e8e8e8" stroke-width="1.3"/><path d="M9 1.5l-2 1-2-.5-1 2-2 1 .5 2-1 2 1 2-.5 2 2 1 1 2 2-.5 2 1" fill="none" stroke="#e8e8e8" stroke-width="1.3"/><circle cx="8" cy="9" r="2.5" fill="none" stroke="#e8e8e8" stroke-width="1.3"/><path d="M11 13h7 M11 15.5h7" stroke="#e8e8e8" stroke-width="1.3"/></svg>
<div class="t" style="left:37px;top:612.3px;font-size:14px;color:#fff;font-weight:bold;-webkit-text-stroke:0">基础配置</div>
<div class="a" style="left:163px;top:617px;width:0;height:0;border-left:4px solid transparent;border-right:4px solid transparent;border-top:5px solid #8a8d99"></div>
<svg class="a" style="left:13px;top:660px" width="19" height="19" viewBox="0 0 19 19"><circle cx="9" cy="9" r="2.8" fill="none" stroke="#e8e8e8" stroke-width="1.3"/><path d="M7.5 1h3l.5 2.3 2-1.1 2 2-1.1 2L16.2 7v3l-2.3.5 1.1 2-2 2-2-1.1-.5 2.3h-3l-.5-2.3-2 1.1-2-2 1.1-2L1.8 10V7l2.3-.5-1.1-2 2-2 2 1.1z" fill="none" stroke="#e8e8e8" stroke-width="1.3"/></svg>
<div class="t" style="left:37px;top:662.3px;font-size:14px;color:#fff;font-weight:bold;-webkit-text-stroke:0">系统设置</div>
<div class="a" style="left:163px;top:667px;width:0;height:0;border-left:4px solid transparent;border-right:4px solid transparent;border-top:5px solid #8a8d99"></div>
<svg class="a" style="left:13px;top:708px" width="19" height="19" viewBox="0 0 19 19"><path d="M2 17V8 M5.5 17V5 M9 17V6 M12.5 17V5 M16 17V8 M1 7l4-3 4 1.5 4-3 4 3" fill="none" stroke="#e8e8e8" stroke-width="1.2"/></svg>
<div class="t" style="left:37px;top:710.3px;font-size:14px;color:#fff;font-weight:bold;-webkit-text-stroke:0">操作日志</div>
<div class="t" style="left:33px;top:373.3px;font-size:14px;color:#fff;font-weight:bold;-webkit-text-stroke:0">素材管理</div>
<div class="t" style="left:33px;top:419.3px;font-size:14px;color:#fff;font-weight:bold;-webkit-text-stroke:0">素材审核</div>
<div class="a" style="left:193px;top:214px;width:1570px;height:14px;background:linear-gradient(#f3f5fa,#fff)"></div>
<div class="a" style="left:208px;top:226px;width:296px;height:690px;border:1px solid #dcdfe6;border-right:none;border-bottom:none;background:#fff"></div>
<div class="a" style="left:503px;top:226px;width:5px;height:690px;background:#d4d4d4"></div>
<div class="t" style="left:215px;top:234.3px;font-size:14px;color:#000;">素材库</div>
<svg class="a" style="left:453px;top:234px" width="18" height="17" viewBox="0 0 18 17"><path d="M15.67 6.38 L17.44 6.86 L17.44 10.14 L15.67 10.62 L14.17 13.22 L14.64 14.99 L11.80 16.63 L10.50 15.34 L7.50 15.34 L6.20 16.63 L3.36 14.99 L3.83 13.22 L2.33 10.62 L0.56 10.14 L0.56 6.86 L2.33 6.38 L3.83 3.78 L3.36 2.01 L6.20 0.37 L7.50 1.66 L10.50 1.66 L11.80 0.37 L14.64 2.01 L14.17 3.78z" fill="none" stroke="#1a5cff" stroke-width="1.3" stroke-linejoin="round"/><circle cx="9" cy="8.5" r="3.6" fill="none" stroke="#1a5cff" stroke-width="1.2"/></svg>
<svg class="a" style="left:484px;top:236px" width="16" height="14" viewBox="0 0 16 14"><path d="M0 1.5h16 M6 6.7h10 M0 11.7h16" stroke="#1a5cff" stroke-width="2.8"/><path d="M0.3 6.7l3.8-2.8v5.6z" fill="#1a5cff"/></svg>
<div class="a" style="left:209px;top:258px;width:294px;height:1px;background:#dcdfe6"></div>
<div class="a" style="left:209px;top:269px;width:294px;height:30px;background:#c6e2f7"></div>
<div class="a" style="left:218px;top:282px;width:0;height:0;border-left:3.5px solid transparent;border-right:3.5px solid transparent;border-top:4px solid #c0c4cc"></div>
<svg class="a" style="left:234px;top:275px" width="17" height="15" viewBox="0 0 17 15"><path d="M0 2a2 2 0 0 1 2-2h4l2 2h7a2 2 0 0 1 2 2v9a2 2 0 0 1-2 2H2a2 2 0 0 1-2-2z" fill="#ffb74d"/><path d="M0 5a2 2 0 0 1 2-2h13a2 2 0 0 1 2 2v8a2 2 0 0 1-2 2H2a2 2 0 0 1-2-2z" fill="#ffd54f"/></svg>
<div class="t" style="left:253px;top:276.3px;font-size:14px;color:#000;">测试企业</div>
<svg class="a" style="left:252px;top:304px" width="17" height="15" viewBox="0 0 17 15"><path d="M0 2a2 2 0 0 1 2-2h4l2 2h7a2 2 0 0 1 2 2v9a2 2 0 0 1-2 2H2a2 2 0 0 1-2-2z" fill="#ffb74d"/><path d="M0 5a2 2 0 0 1 2-2h13a2 2 0 0 1 2 2v8a2 2 0 0 1-2 2H2a2 2 0 0 1-2-2z" fill="#ffd54f"/></svg>
<div class="t" style="left:271px;top:306.3px;font-size:14px;color:#000;">企业资料</div>
<svg class="a" style="left:252px;top:334px" width="17" height="15" viewBox="0 0 17 15"><path d="M0 2a2 2 0 0 1 2-2h4l2 2h7a2 2 0 0 1 2 2v9a2 2 0 0 1-2 2H2a2 2 0 0 1-2-2z" fill="#ffb74d"/><path d="M0 5a2 2 0 0 1 2-2h13a2 2 0 0 1 2 2v8a2 2 0 0 1-2 2H2a2 2 0 0 1-2-2z" fill="#ffd54f"/></svg>
<div class="t" style="left:271px;top:336.3px;font-size:14px;color:#000;">资质证书</div>
<svg class="a" style="left:252px;top:364px" width="17" height="15" viewBox="0 0 17 15"><path d="M0 2a2 2 0 0 1 2-2h4l2 2h7a2 2 0 0 1 2 2v9a2 2 0 0 1-2 2H2a2 2 0 0 1-2-2z" fill="#ffb74d"/><path d="M0 5a2 2 0 0 1 2-2h13a2 2 0 0 1 2 2v8a2 2 0 0 1-2 2H2a2 2 0 0 1-2-2z" fill="#ffd54f"/></svg>
<div class="t" style="left:271px;top:366.3px;font-size:14px;color:#000;">人员资料</div>
<svg class="a" style="left:252px;top:394px" width="17" height="15" viewBox="0 0 17 15"><path d="M0 2a2 2 0 0 1 2-2h4l2 2h7a2 2 0 0 1 2 2v9a2 2 0 0 1-2 2H2a2 2 0 0 1-2-2z" fill="#ffb74d"/><path d="M0 5a2 2 0 0 1 2-2h13a2 2 0 0 1 2 2v8a2 2 0 0 1-2 2H2a2 2 0 0 1-2-2z" fill="#ffd54f"/></svg>
<div class="t" style="left:271px;top:396.3px;font-size:14px;color:#000;">业绩履历</div>
<svg class="a" style="left:252px;top:424px" width="17" height="15" viewBox="0 0 17 15"><path d="M0 2a2 2 0 0 1 2-2h4l2 2h7a2 2 0 0 1 2 2v9a2 2 0 0 1-2 2H2a2 2 0 0 1-2-2z" fill="#ffb74d"/><path d="M0 5a2 2 0 0 1 2-2h13a2 2 0 0 1 2 2v8a2 2 0 0 1-2 2H2a2 2 0 0 1-2-2z" fill="#ffd54f"/></svg>
<div class="t" style="left:271px;top:426.3px;font-size:14px;color:#000;">财务报表</div>
<svg class="a" style="left:252px;top:454px" width="17" height="15" viewBox="0 0 17 15"><path d="M0 2a2 2 0 0 1 2-2h4l2 2h7a2 2 0 0 1 2 2v9a2 2 0 0 1-2 2H2a2 2 0 0 1-2-2z" fill="#ffb74d"/><path d="M0 5a2 2 0 0 1 2-2h13a2 2 0 0 1 2 2v8a2 2 0 0 1-2 2H2a2 2 0 0 1-2-2z" fill="#ffd54f"/></svg>
<div class="t" style="left:271px;top:456.3px;font-size:14px;color:#000;">技术方案</div>
<svg class="a" style="left:252px;top:484px" width="17" height="15" viewBox="0 0 17 15"><path d="M0 2a2 2 0 0 1 2-2h4l2 2h7a2 2 0 0 1 2 2v9a2 2 0 0 1-2 2H2a2 2 0 0 1-2-2z" fill="#ffb74d"/><path d="M0 5a2 2 0 0 1 2-2h13a2 2 0 0 1 2 2v8a2 2 0 0 1-2 2H2a2 2 0 0 1-2-2z" fill="#ffd54f"/></svg>
<div class="t" style="left:271px;top:486.3px;font-size:14px;color:#000;">标准规范</div>
<svg class="a" style="left:252px;top:514px" width="17" height="15" viewBox="0 0 17 15"><path d="M0 2a2 2 0 0 1 2-2h4l2 2h7a2 2 0 0 1 2 2v9a2 2 0 0 1-2 2H2a2 2 0 0 1-2-2z" fill="#ffb74d"/><path d="M0 5a2 2 0 0 1 2-2h13a2 2 0 0 1 2 2v8a2 2 0 0 1-2 2H2a2 2 0 0 1-2-2z" fill="#ffd54f"/></svg>
<div class="t" style="left:271px;top:516.3px;font-size:14px;color:#000;">标书模板</div>
<svg class="a" style="left:252px;top:544px" width="17" height="15" viewBox="0 0 17 15"><path d="M0 2a2 2 0 0 1 2-2h4l2 2h7a2 2 0 0 1 2 2v9a2 2 0 0 1-2 2H2a2 2 0 0 1-2-2z" fill="#ffb74d"/><path d="M0 5a2 2 0 0 1 2-2h13a2 2 0 0 1 2 2v8a2 2 0 0 1-2 2H2a2 2 0 0 1-2-2z" fill="#ffd54f"/></svg>
<div class="t" style="left:271px;top:546.3px;font-size:14px;color:#000;">中交建设路桥局集团有限公司</div>
<div class="a" style="left:237px;top:550px;width:0;height:0;border-top:3.5px solid transparent;border-bottom:3.5px solid transparent;border-left:4px solid #c0c4cc"></div>
<svg class="a" style="left:252px;top:574px" width="17" height="15" viewBox="0 0 17 15"><path d="M0 2a2 2 0 0 1 2-2h4l2 2h7a2 2 0 0 1 2 2v9a2 2 0 0 1-2 2H2a2 2 0 0 1-2-2z" fill="#ffb74d"/><path d="M0 5a2 2 0 0 1 2-2h13a2 2 0 0 1 2 2v8a2 2 0 0 1-2 2H2a2 2 0 0 1-2-2z" fill="#ffd54f"/></svg>
<div class="t" style="left:271px;top:576.3px;font-size:14px;color:#000;">中交路桥局第一工程有限公司</div>
<div class="a" style="left:237px;top:580px;width:0;height:0;border-top:3.5px solid transparent;border-bottom:3.5px solid transparent;border-left:4px solid #c0c4cc"></div>
<svg class="a" style="left:252px;top:604px" width="17" height="15" viewBox="0 0 17 15"><path d="M0 2a2 2 0 0 1 2-2h4l2 2h7a2 2 0 0 1 2 2v9a2 2 0 0 1-2 2H2a2 2 0 0 1-2-2z" fill="#ffb74d"/><path d="M0 5a2 2 0 0 1 2-2h13a2 2 0 0 1 2 2v8a2 2 0 0 1-2 2H2a2 2 0 0 1-2-2z" fill="#ffd54f"/></svg>
<div class="t" style="left:271px;top:606.3px;font-size:14px;color:#000;">中交路桥局第二工程有限公司</div>
<div class="a" style="left:237px;top:610px;width:0;height:0;border-top:3.5px solid transparent;border-bottom:3.5px solid transparent;border-left:4px solid #c0c4cc"></div>
<div class="t" style="left:518px;top:234.3px;font-size:14px;color:#1a5cff">测试企业<span style="font-size:12px;color:#999;margin-left:-1px">（包含11个项目）</span></div>
<div class="a" style="left:518px;top:269px;width:252px;height:32px;border:1px solid #dcdfe6;border-radius:4px"></div>
<div class="t" style="left:530px;top:277.3px;font-size:14px;color:#b8bcc4;">请输入名称</div>
<div class="a" style="left:775px;top:277px;width:15px;height:15px;border:1px solid #8a8a8a;border-radius:2px"></div>
<div class="t" style="left:795px;top:277.3px;font-size:14px;color:#111;">深度检索</div>
<svg class="a" style="left:1127px;top:238px" width="16" height="14" viewBox="0 0 16 14"><path d="M0 1.2h15.5 M0 11.7h15.5" stroke="#1a5cff" stroke-width="2.5"/><path d="M0 6.5h10.5" stroke="#1a5cff" stroke-width="2.5"/><path d="M11.5 3.5l3.8 3-3.8 3z" fill="#1a5cff"/></svg>
<svg class="a" style="left:1156px;top:236px" width="17" height="17" viewBox="0 0 17 17"><rect x="0.8" y="0.8" width="15.2" height="15.5" rx="0.8" fill="none" stroke="#3a6ff7" stroke-width="1.3"/><path d="M1 15.5l5.3-6.5 4.3 3 5.4-6.5" fill="none" stroke="#2f63f5" stroke-width="1.1"/><circle cx="5.5" cy="5.2" r="1.1" fill="#2f63f5"/></svg>
<svg class="a" style="left:1185px;top:236px" width="18" height="18" viewBox="0 0 18 18"><path d="M16.2 8A7.2 7.2 0 0 0 3.6 4.3" fill="none" stroke="#1a5cff" stroke-width="1.3"/><path d="M1.3 9A7.2 7.2 0 0 0 13.9 12.7" fill="none" stroke="#1a5cff" stroke-width="1.3"/><path d="M2.2 1.5l-.2 4.8 4.3-.6z" fill="#1a5cff"/><path d="M15.3 15.5l.2-4.8-4.3.6z" fill="#1a5cff"/></svg>
<div class="a" style="left:1234px;top:231px;width:107px;height:28px;background:#1565e8;border-radius:3px"></div>
<div class="t" style="left:1245px;top:238.4px;font-size:12px;color:#fff;font-weight:bold;-webkit-text-stroke:0">新增条目</div>
<div class="a" style="left:1304px;top:231px;width:37px;height:28px;background:#6aaefd;border-radius:0 3px 3px 0"></div>
<div class="a" style="left:1303px;top:231px;width:1px;height:28px;background:#e6f0ff"></div>
<div class="a" style="left:1317px;top:243px;width:0;height:0;border-left:4.5px solid transparent;border-right:4.5px solid transparent;border-top:5px solid #fff"></div>
<div class="a" style="left:1351px;top:231px;width:107px;height:28px;background:#1565e8;border-radius:3px"></div>
<div class="t" style="left:1362px;top:238.4px;font-size:12px;color:#fff;font-weight:bold;-webkit-text-stroke:0">上传文件</div>
<div class="a" style="left:1420px;top:238px;width:1px;height:14px;background:#8db4f5"></div>
<div class="a" style="left:1434px;top:243px;width:0;height:0;border-left:4.5px solid transparent;border-right:4.5px solid transparent;border-top:5px solid #fff"></div>
<div class="a" style="left:1468px;top:231px;width:107px;height:28px;background:#1565e8;border-radius:3px"></div>
<div class="t" style="left:1479px;top:238.4px;font-size:12px;color:#fff;font-weight:bold;-webkit-text-stroke:0">批量修改</div>
<div class="a" style="left:1537px;top:238px;width:1px;height:14px;background:#8db4f5"></div>
<div class="a" style="left:1551px;top:243px;width:0;height:0;border-left:4.5px solid transparent;border-right:4.5px solid transparent;border-top:5px solid #fff"></div>
<div class="a" style="left:1585px;top:231px;width:83px;height:28px;background:#1565e8;border-radius:3px"></div>
<div class="t" style="left:1596px;top:238.4px;font-size:12px;color:#fff;font-weight:bold;-webkit-text-stroke:0">导出</div>
<div class="a" style="left:1630px;top:238px;width:1px;height:14px;background:#8db4f5"></div>
<div class="a" style="left:1644px;top:243px;width:0;height:0;border-left:4.5px solid transparent;border-right:4.5px solid transparent;border-top:5px solid #fff"></div>
<div class="a" style="left:1678px;top:231px;width:70px;height:28px;background:#f56c6c;border-radius:3px"></div>
<div class="t" style="left:1689px;top:238.4px;font-size:12px;color:#fff;font-weight:bold;-webkit-text-stroke:0">批量删除</div>
<div class="a" style="left:518px;top:314px;width:930px;height:463px;border:1px solid #ebeef5;background:#fff"></div>
<div class="a" style="left:518px;top:314px;width:930px;height:39px;background:#f2f3f7;border-bottom:1px solid #e4e7ed"></div>
<div class="a" style="left:568px;top:314px;width:1px;height:456px;background:#e8eaf0"></div>
<div class="a" style="left:618px;top:314px;width:1px;height:456px;background:#e8eaf0"></div>
<div class="a" style="left:858px;top:314px;width:1px;height:456px;background:#e8eaf0"></div>
<div class="a" style="left:958px;top:314px;width:1px;height:456px;background:#e8eaf0"></div>
<div class="a" style="left:1058px;top:314px;width:1px;height:456px;background:#e8eaf0"></div>
<div class="a" style="left:1218px;top:314px;width:1px;height:456px;background:#e8eaf0"></div>
<div class="a" style="left:1318px;top:314px;width:1px;height:456px;background:#e8eaf0"></div>
<div class="a" style="left:518px;top:390px;width:929px;height:1px;background:#e8eaf0"></div>
<div class="a" style="left:518px;top:428px;width:929px;height:1px;background:#e8eaf0"></div>
<div class="a" style="left:518px;top:466px;width:929px;height:1px;background:#e8eaf0"></div>
<div class="a" style="left:518px;top:504px;width:929px;height:1px;background:#e8eaf0"></div>
<div class="a" style="left:518px;top:542px;width:929px;height:1px;background:#e8eaf0"></div>
<div class="a" style="left:518px;top:580px;width:929px;height:1px;background:#e8eaf0"></div>
<div class="a" style="left:518px;top:618px;width:929px;height:1px;background:#e8eaf0"></div>
<div class="a" style="left:518px;top:656px;width:929px;height:1px;background:#e8eaf0"></div>
<div class="a" style="left:518px;top:694px;width:929px;height:1px;background:#e8eaf0"></div>
<div class="a" style="left:518px;top:732px;width:929px;height:1px;background:#e8eaf0"></div>
<div class="a" style="left:518px;top:770px;width:929px;height:1px;background:#e8eaf0"></div>
<div class="a" style="left:536px;top:326px;width:15px;height:15px;border:1px solid #8a8a8a;border-radius:2px;background:#fff"></div>
<div class="t" style="left:574px;top:325.3px;font-size:14px;color:#909399;">序号</div>
<div class="t" style="left:624px;top:325.3px;font-size:14px;color:#909399;">名称</div>
<div class="t" style="left:864px;top:325.3px;font-size:14px;color:#909399;">素材状态</div>
<div class="t" style="left:964px;top:325.3px;font-size:14px;color:#909399;">类型</div>
<div class="t" style="left:1064px;top:325.3px;font-size:14px;color:#909399;">使用次数</div>
<div class="t" style="left:1224px;top:325.3px;font-size:14px;color:#909399;">文件大小</div>
<div class="a" style="left:534px;top:364px;width:15px;height:15px;border:1px solid #8a8a8a;border-radius:2px;background:#fff"></div>
<div class="t" style="left:574px;top:364.3px;font-size:14px;color:#000;">1</div>
<svg class="a" style="left:625px;top:363px" width="16" height="14" viewBox="0 0 17 15"><path d="M0 2a2 2 0 0 1 2-2h4l2 2h7a2 2 0 0 1 2 2v9a2 2 0 0 1-2 2H2a2 2 0 0 1-2-2z" fill="#ffb74d"/><path d="M0 5a2 2 0 0 1 2-2h13a2 2 0 0 1 2 2v8a2 2 0 0 1-2 2H2a2 2 0 0 1-2-2z" fill="#ffd54f"/></svg>
<div class="t" style="left:647px;top:364.3px;font-size:14px;color:#000;">企业资料</div>
<div class="t" style="left:964px;top:364.3px;font-size:14px;color:#000;">文件夹</div>
<div class="a" style="left:534px;top:402px;width:15px;height:15px;border:1px solid #8a8a8a;border-radius:2px;background:#fff"></div>
<div class="t" style="left:574px;top:402.3px;font-size:14px;color:#000;">2</div>
<svg class="a" style="left:625px;top:401px" width="16" height="14" viewBox="0 0 17 15"><path d="M0 2a2 2 0 0 1 2-2h4l2 2h7a2 2 0 0 1 2 2v9a2 2 0 0 1-2 2H2a2 2 0 0 1-2-2z" fill="#ffb74d"/><path d="M0 5a2 2 0 0 1 2-2h13a2 2 0 0 1 2 2v8a2 2 0 0 1-2 2H2a2 2 0 0 1-2-2z" fill="#ffd54f"/></svg>
<div class="t" style="left:647px;top:402.3px;font-size:14px;color:#000;">资质证书</div>
<div class="t" style="left:964px;top:402.3px;font-size:14px;color:#000;">文件夹</div>
<div class="a" style="left:534px;top:440px;width:15px;height:15px;border:1px solid #8a8a8a;border-radius:2px;background:#fff"></div>
<div class="t" style="left:574px;top:440.3px;font-size:14px;color:#000;">3</div>
<svg class="a" style="left:625px;top:439px" width="16" height="14" viewBox="0 0 17 15"><path d="M0 2a2 2 0 0 1 2-2h4l2 2h7a2 2 0 0 1 2 2v9a2 2 0 0 1-2 2H2a2 2 0 0 1-2-2z" fill="#ffb74d"/><path d="M0 5a2 2 0 0 1 2-2h13a2 2 0 0 1 2 2v8a2 2 0 0 1-2 2H2a2 2 0 0 1-2-2z" fill="#ffd54f"/></svg>
<div class="t" style="left:647px;top:440.3px;font-size:14px;color:#000;">人员资料</div>
<div class="t" style="left:964px;top:440.3px;font-size:14px;color:#000;">文件夹</div>
<div class="a" style="left:534px;top:478px;width:15px;height:15px;border:1px solid #8a8a8a;border-radius:2px;background:#fff"></div>
<div class="t" style="left:574px;top:478.3px;font-size:14px;color:#000;">4</div>
<svg class="a" style="left:625px;top:477px" width="16" height="14" viewBox="0 0 17 15"><path d="M0 2a2 2 0 0 1 2-2h4l2 2h7a2 2 0 0 1 2 2v9a2 2 0 0 1-2 2H2a2 2 0 0 1-2-2z" fill="#ffb74d"/><path d="M0 5a2 2 0 0 1 2-2h13a2 2 0 0 1 2 2v8a2 2 0 0 1-2 2H2a2 2 0 0 1-2-2z" fill="#ffd54f"/></svg>
<div class="t" style="left:647px;top:478.3px;font-size:14px;color:#000;">业绩履历</div>
<div class="t" style="left:964px;top:478.3px;font-size:14px;color:#000;">文件夹</div>
<div class="a" style="left:534px;top:516px;width:15px;height:15px;border:1px solid #8a8a8a;border-radius:2px;background:#fff"></div>
<div class="t" style="left:574px;top:516.3px;font-size:14px;color:#000;">5</div>
<svg class="a" style="left:625px;top:515px" width="16" height="14" viewBox="0 0 17 15"><path d="M0 2a2 2 0 0 1 2-2h4l2 2h7a2 2 0 0 1 2 2v9a2 2 0 0 1-2 2H2a2 2 0 0 1-2-2z" fill="#ffb74d"/><path d="M0 5a2 2 0 0 1 2-2h13a2 2 0 0 1 2 2v8a2 2 0 0 1-2 2H2a2 2 0 0 1-2-2z" fill="#ffd54f"/></svg>
<div class="t" style="left:647px;top:516.3px;font-size:14px;color:#000;">财务报表</div>
<div class="t" style="left:964px;top:516.3px;font-size:14px;color:#000;">文件夹</div>
<div class="a" style="left:534px;top:554px;width:15px;height:15px;border:1px solid #8a8a8a;border-radius:2px;background:#fff"></div>
<div class="t" style="left:574px;top:554.3px;font-size:14px;color:#000;">6</div>
<svg class="a" style="left:625px;top:553px" width="16" height="14" viewBox="0 0 17 15"><path d="M0 2a2 2 0 0 1 2-2h4l2 2h7a2 2 0 0 1 2 2v9a2 2 0 0 1-2 2H2a2 2 0 0 1-2-2z" fill="#ffb74d"/><path d="M0 5a2 2 0 0 1 2-2h13a2 2 0 0 1 2 2v8a2 2 0 0 1-2 2H2a2 2 0 0 1-2-2z" fill="#ffd54f"/></svg>
<div class="t" style="left:647px;top:554.3px;font-size:14px;color:#000;">技术方案</div>
<div class="t" style="left:964px;top:554.3px;font-size:14px;color:#000;">文件夹</div>
<div class="a" style="left:534px;top:592px;width:15px;height:15px;border:1px solid #8a8a8a;border-radius:2px;background:#fff"></div>
<div class="t" style="left:574px;top:592.3px;font-size:14px;color:#000;">7</div>
<svg class="a" style="left:625px;top:591px" width="16" height="14" viewBox="0 0 17 15"><path d="M0 2a2 2 0 0 1 2-2h4l2 2h7a2 2 0 0 1 2 2v9a2 2 0 0 1-2 2H2a2 2 0 0 1-2-2z" fill="#ffb74d"/><path d="M0 5a2 2 0 0 1 2-2h13a2 2 0 0 1 2 2v8a2 2 0 0 1-2 2H2a2 2 0 0 1-2-2z" fill="#ffd54f"/></svg>
<div class="t" style="left:647px;top:592.3px;font-size:14px;color:#000;">标准规范</div>
<div class="t" style="left:964px;top:592.3px;font-size:14px;color:#000;">文件夹</div>
<div class="a" style="left:534px;top:630px;width:15px;height:15px;border:1px solid #8a8a8a;border-radius:2px;background:#fff"></div>
<div class="t" style="left:574px;top:630.3px;font-size:14px;color:#000;">8</div>
<svg class="a" style="left:625px;top:629px" width="16" height="14" viewBox="0 0 17 15"><path d="M0 2a2 2 0 0 1 2-2h4l2 2h7a2 2 0 0 1 2 2v9a2 2 0 0 1-2 2H2a2 2 0 0 1-2-2z" fill="#ffb74d"/><path d="M0 5a2 2 0 0 1 2-2h13a2 2 0 0 1 2 2v8a2 2 0 0 1-2 2H2a2 2 0 0 1-2-2z" fill="#ffd54f"/></svg>
<div class="t" style="left:647px;top:630.3px;font-size:14px;color:#000;">标书模板</div>
<div class="t" style="left:964px;top:630.3px;font-size:14px;color:#000;">文件夹</div>
<div class="a" style="left:534px;top:668px;width:15px;height:15px;border:1px solid #8a8a8a;border-radius:2px;background:#fff"></div>
<div class="t" style="left:574px;top:668.3px;font-size:14px;color:#000;">9</div>
<svg class="a" style="left:625px;top:667px" width="16" height="14" viewBox="0 0 17 15"><path d="M0 2a2 2 0 0 1 2-2h4l2 2h7a2 2 0 0 1 2 2v9a2 2 0 0 1-2 2H2a2 2 0 0 1-2-2z" fill="#ffb74d"/><path d="M0 5a2 2 0 0 1 2-2h13a2 2 0 0 1 2 2v8a2 2 0 0 1-2 2H2a2 2 0 0 1-2-2z" fill="#ffd54f"/></svg>
<div class="t" style="left:647px;top:668.3px;font-size:14px;color:#000;">中交建设路桥局集团有限...</div>
<div class="t" style="left:964px;top:668.3px;font-size:14px;color:#000;">文件夹</div>
<div class="a" style="left:534px;top:706px;width:15px;height:15px;border:1px solid #8a8a8a;border-radius:2px;background:#fff"></div>
<div class="t" style="left:574px;top:706.3px;font-size:14px;color:#000;">10</div>
<svg class="a" style="left:625px;top:705px" width="16" height="14" viewBox="0 0 17 15"><path d="M0 2a2 2 0 0 1 2-2h4l2 2h7a2 2 0 0 1 2 2v9a2 2 0 0 1-2 2H2a2 2 0 0 1-2-2z" fill="#ffb74d"/><path d="M0 5a2 2 0 0 1 2-2h13a2 2 0 0 1 2 2v8a2 2 0 0 1-2 2H2a2 2 0 0 1-2-2z" fill="#ffd54f"/></svg>
<div class="t" style="left:647px;top:706.3px;font-size:14px;color:#000;">中交路桥局第一工程有限...</div>
<div class="t" style="left:964px;top:706.3px;font-size:14px;color:#000;">文件夹</div>
<div class="a" style="left:534px;top:744px;width:15px;height:15px;border:1px solid #8a8a8a;border-radius:2px;background:#fff"></div>
<div class="t" style="left:574px;top:744.3px;font-size:14px;color:#000;">11</div>
<svg class="a" style="left:625px;top:743px" width="16" height="14" viewBox="0 0 17 15"><path d="M0 2a2 2 0 0 1 2-2h4l2 2h7a2 2 0 0 1 2 2v9a2 2 0 0 1-2 2H2a2 2 0 0 1-2-2z" fill="#ffb74d"/><path d="M0 5a2 2 0 0 1 2-2h13a2 2 0 0 1 2 2v8a2 2 0 0 1-2 2H2a2 2 0 0 1-2-2z" fill="#ffd54f"/></svg>
<div class="t" style="left:647px;top:744.3px;font-size:14px;color:#000;">中交路桥局第二工程有限...</div>
<div class="t" style="left:964px;top:744.3px;font-size:14px;color:#000;">文件夹</div>
<div class="a" style="left:1327px;top:314px;width:121px;height:456px;background:#fff;box-shadow:-3px 0 5px rgba(0,0,0,.04);border-right:1px solid #ebeef5"></div>
<div class="a" style="left:1327px;top:314px;width:120px;height:39px;background:#f2f3f7;border-bottom:1px solid #e4e7ed"></div>
<div class="a" style="left:1327px;top:390px;width:120px;height:1px;background:#e8eaf0"></div>
<div class="a" style="left:1327px;top:428px;width:120px;height:1px;background:#e8eaf0"></div>
<div class="a" style="left:1327px;top:466px;width:120px;height:1px;background:#e8eaf0"></div>
<div class="a" style="left:1327px;top:504px;width:120px;height:1px;background:#e8eaf0"></div>
<div class="a" style="left:1327px;top:542px;width:120px;height:1px;background:#e8eaf0"></div>
<div class="a" style="left:1327px;top:580px;width:120px;height:1px;background:#e8eaf0"></div>
<div class="a" style="left:1327px;top:618px;width:120px;height:1px;background:#e8eaf0"></div>
<div class="a" style="left:1327px;top:656px;width:120px;height:1px;background:#e8eaf0"></div>
<div class="a" style="left:1327px;top:694px;width:120px;height:1px;background:#e8eaf0"></div>
<div class="a" style="left:1327px;top:732px;width:120px;height:1px;background:#e8eaf0"></div>
<div class="a" style="left:1327px;top:770px;width:120px;height:1px;background:#e8eaf0"></div>
<div class="t" style="left:1374px;top:325.3px;font-size:14px;color:#909399;">操作</div>
<svg class="a" style="left:1324px;top:364px" width="5" height="13" viewBox="0 0 5 13"><path d="M1.3 1.2l2.3 1.3 M1 4.8l2.3 1.3" stroke="#111" stroke-width="1.5"/><path d="M3.6 7.5L1.5 12.5" stroke="#111" stroke-width="1.3"/></svg>
<svg class="a" style="left:1342px;top:364px" width="20" height="14" viewBox="0 0 20 14"><path d="M1 7c2.5-4 5.5-5.8 9-5.8s6.5 1.8 9 5.8c-2.5 4-5.5 5.8-9 5.8S3.5 11 1 7z" fill="none" stroke="#1a63f0" stroke-width="1.3"/><circle cx="10" cy="7" r="3.4" fill="none" stroke="#1a63f0" stroke-width="1.3"/></svg>
<svg class="a" style="left:1371px;top:363px" width="17" height="17" viewBox="0 0 17 17"><path d="M0.5 3.5h15.5 M5.5 3.5l.4-2.3h4.8l.4 2.3 M2.2 3.5V15.5h12.2V3.5" fill="none" stroke="#1a63f0" stroke-width="1.4"/><path d="M6.8 7v6.5 M9.8 7v6.5" stroke="#1a63f0" stroke-width="1.3"/></svg>
<svg class="a" style="left:1400px;top:362px" width="16" height="18" viewBox="0 0 16 18"><path d="M8 1.2c-1.3 1-2.6 1.7-6.3 2.3v5.8c0 3.8 2.8 6.3 6.3 8 3.5-1.7 6.3-4.2 6.3-8V3.5C10.6 2.9 9.3 2.2 8 1.2z" fill="none" stroke="#1a63f0" stroke-width="1.3"/><path d="M4.5 8.6l2.8 2.6 4.2-4.6" fill="none" stroke="#1a63f0" stroke-width="1.3"/></svg>
<svg class="a" style="left:1324px;top:402px" width="5" height="13" viewBox="0 0 5 13"><path d="M1.3 1.2l2.3 1.3 M1 4.8l2.3 1.3" stroke="#111" stroke-width="1.5"/><path d="M3.6 7.5L1.5 12.5" stroke="#111" stroke-width="1.3"/></svg>
<svg class="a" style="left:1342px;top:402px" width="20" height="14" viewBox="0 0 20 14"><path d="M1 7c2.5-4 5.5-5.8 9-5.8s6.5 1.8 9 5.8c-2.5 4-5.5 5.8-9 5.8S3.5 11 1 7z" fill="none" stroke="#1a63f0" stroke-width="1.3"/><circle cx="10" cy="7" r="3.4" fill="none" stroke="#1a63f0" stroke-width="1.3"/></svg>
<svg class="a" style="left:1371px;top:401px" width="17" height="17" viewBox="0 0 17 17"><path d="M0.5 3.5h15.5 M5.5 3.5l.4-2.3h4.8l.4 2.3 M2.2 3.5V15.5h12.2V3.5" fill="none" stroke="#1a63f0" stroke-width="1.4"/><path d="M6.8 7v6.5 M9.8 7v6.5" stroke="#1a63f0" stroke-width="1.3"/></svg>
<svg class="a" style="left:1400px;top:400px" width="16" height="18" viewBox="0 0 16 18"><path d="M8 1.2c-1.3 1-2.6 1.7-6.3 2.3v5.8c0 3.8 2.8 6.3 6.3 8 3.5-1.7 6.3-4.2 6.3-8V3.5C10.6 2.9 9.3 2.2 8 1.2z" fill="none" stroke="#1a63f0" stroke-width="1.3"/><path d="M4.5 8.6l2.8 2.6 4.2-4.6" fill="none" stroke="#1a63f0" stroke-width="1.3"/></svg>
<svg class="a" style="left:1324px;top:440px" width="5" height="13" viewBox="0 0 5 13"><path d="M1.3 1.2l2.3 1.3 M1 4.8l2.3 1.3" stroke="#111" stroke-width="1.5"/><path d="M3.6 7.5L1.5 12.5" stroke="#111" stroke-width="1.3"/></svg>
<svg class="a" style="left:1342px;top:440px" width="20" height="14" viewBox="0 0 20 14"><path d="M1 7c2.5-4 5.5-5.8 9-5.8s6.5 1.8 9 5.8c-2.5 4-5.5 5.8-9 5.8S3.5 11 1 7z" fill="none" stroke="#1a63f0" stroke-width="1.3"/><circle cx="10" cy="7" r="3.4" fill="none" stroke="#1a63f0" stroke-width="1.3"/></svg>
<svg class="a" style="left:1371px;top:439px" width="17" height="17" viewBox="0 0 17 17"><path d="M0.5 3.5h15.5 M5.5 3.5l.4-2.3h4.8l.4 2.3 M2.2 3.5V15.5h12.2V3.5" fill="none" stroke="#1a63f0" stroke-width="1.4"/><path d="M6.8 7v6.5 M9.8 7v6.5" stroke="#1a63f0" stroke-width="1.3"/></svg>
<svg class="a" style="left:1400px;top:438px" width="16" height="18" viewBox="0 0 16 18"><path d="M8 1.2c-1.3 1-2.6 1.7-6.3 2.3v5.8c0 3.8 2.8 6.3 6.3 8 3.5-1.7 6.3-4.2 6.3-8V3.5C10.6 2.9 9.3 2.2 8 1.2z" fill="none" stroke="#1a63f0" stroke-width="1.3"/><path d="M4.5 8.6l2.8 2.6 4.2-4.6" fill="none" stroke="#1a63f0" stroke-width="1.3"/></svg>
<svg class="a" style="left:1324px;top:478px" width="5" height="13" viewBox="0 0 5 13"><path d="M1.3 1.2l2.3 1.3 M1 4.8l2.3 1.3" stroke="#111" stroke-width="1.5"/><path d="M3.6 7.5L1.5 12.5" stroke="#111" stroke-width="1.3"/></svg>
<svg class="a" style="left:1342px;top:478px" width="20" height="14" viewBox="0 0 20 14"><path d="M1 7c2.5-4 5.5-5.8 9-5.8s6.5 1.8 9 5.8c-2.5 4-5.5 5.8-9 5.8S3.5 11 1 7z" fill="none" stroke="#1a63f0" stroke-width="1.3"/><circle cx="10" cy="7" r="3.4" fill="none" stroke="#1a63f0" stroke-width="1.3"/></svg>
<svg class="a" style="left:1371px;top:477px" width="17" height="17" viewBox="0 0 17 17"><path d="M0.5 3.5h15.5 M5.5 3.5l.4-2.3h4.8l.4 2.3 M2.2 3.5V15.5h12.2V3.5" fill="none" stroke="#1a63f0" stroke-width="1.4"/><path d="M6.8 7v6.5 M9.8 7v6.5" stroke="#1a63f0" stroke-width="1.3"/></svg>
<svg class="a" style="left:1400px;top:476px" width="16" height="18" viewBox="0 0 16 18"><path d="M8 1.2c-1.3 1-2.6 1.7-6.3 2.3v5.8c0 3.8 2.8 6.3 6.3 8 3.5-1.7 6.3-4.2 6.3-8V3.5C10.6 2.9 9.3 2.2 8 1.2z" fill="none" stroke="#1a63f0" stroke-width="1.3"/><path d="M4.5 8.6l2.8 2.6 4.2-4.6" fill="none" stroke="#1a63f0" stroke-width="1.3"/></svg>
<svg class="a" style="left:1324px;top:516px" width="5" height="13" viewBox="0 0 5 13"><path d="M1.3 1.2l2.3 1.3 M1 4.8l2.3 1.3" stroke="#111" stroke-width="1.5"/><path d="M3.6 7.5L1.5 12.5" stroke="#111" stroke-width="1.3"/></svg>
<svg class="a" style="left:1342px;top:516px" width="20" height="14" viewBox="0 0 20 14"><path d="M1 7c2.5-4 5.5-5.8 9-5.8s6.5 1.8 9 5.8c-2.5 4-5.5 5.8-9 5.8S3.5 11 1 7z" fill="none" stroke="#1a63f0" stroke-width="1.3"/><circle cx="10" cy="7" r="3.4" fill="none" stroke="#1a63f0" stroke-width="1.3"/></svg>
<svg class="a" style="left:1371px;top:515px" width="17" height="17" viewBox="0 0 17 17"><path d="M0.5 3.5h15.5 M5.5 3.5l.4-2.3h4.8l.4 2.3 M2.2 3.5V15.5h12.2V3.5" fill="none" stroke="#1a63f0" stroke-width="1.4"/><path d="M6.8 7v6.5 M9.8 7v6.5" stroke="#1a63f0" stroke-width="1.3"/></svg>
<svg class="a" style="left:1400px;top:514px" width="16" height="18" viewBox="0 0 16 18"><path d="M8 1.2c-1.3 1-2.6 1.7-6.3 2.3v5.8c0 3.8 2.8 6.3 6.3 8 3.5-1.7 6.3-4.2 6.3-8V3.5C10.6 2.9 9.3 2.2 8 1.2z" fill="none" stroke="#1a63f0" stroke-width="1.3"/><path d="M4.5 8.6l2.8 2.6 4.2-4.6" fill="none" stroke="#1a63f0" stroke-width="1.3"/></svg>
<svg class="a" style="left:1324px;top:554px" width="5" height="13" viewBox="0 0 5 13"><path d="M1.3 1.2l2.3 1.3 M1 4.8l2.3 1.3" stroke="#111" stroke-width="1.5"/><path d="M3.6 7.5L1.5 12.5" stroke="#111" stroke-width="1.3"/></svg>
<svg class="a" style="left:1342px;top:554px" width="20" height="14" viewBox="0 0 20 14"><path d="M1 7c2.5-4 5.5-5.8 9-5.8s6.5 1.8 9 5.8c-2.5 4-5.5 5.8-9 5.8S3.5 11 1 7z" fill="none" stroke="#1a63f0" stroke-width="1.3"/><circle cx="10" cy="7" r="3.4" fill="none" stroke="#1a63f0" stroke-width="1.3"/></svg>
<svg class="a" style="left:1371px;top:553px" width="17" height="17" viewBox="0 0 17 17"><path d="M0.5 3.5h15.5 M5.5 3.5l.4-2.3h4.8l.4 2.3 M2.2 3.5V15.5h12.2V3.5" fill="none" stroke="#1a63f0" stroke-width="1.4"/><path d="M6.8 7v6.5 M9.8 7v6.5" stroke="#1a63f0" stroke-width="1.3"/></svg>
<svg class="a" style="left:1400px;top:552px" width="16" height="18" viewBox="0 0 16 18"><path d="M8 1.2c-1.3 1-2.6 1.7-6.3 2.3v5.8c0 3.8 2.8 6.3 6.3 8 3.5-1.7 6.3-4.2 6.3-8V3.5C10.6 2.9 9.3 2.2 8 1.2z" fill="none" stroke="#1a63f0" stroke-width="1.3"/><path d="M4.5 8.6l2.8 2.6 4.2-4.6" fill="none" stroke="#1a63f0" stroke-width="1.3"/></svg>
<svg class="a" style="left:1324px;top:592px" width="5" height="13" viewBox="0 0 5 13"><path d="M1.3 1.2l2.3 1.3 M1 4.8l2.3 1.3" stroke="#111" stroke-width="1.5"/><path d="M3.6 7.5L1.5 12.5" stroke="#111" stroke-width="1.3"/></svg>
<svg class="a" style="left:1342px;top:592px" width="20" height="14" viewBox="0 0 20 14"><path d="M1 7c2.5-4 5.5-5.8 9-5.8s6.5 1.8 9 5.8c-2.5 4-5.5 5.8-9 5.8S3.5 11 1 7z" fill="none" stroke="#1a63f0" stroke-width="1.3"/><circle cx="10" cy="7" r="3.4" fill="none" stroke="#1a63f0" stroke-width="1.3"/></svg>
<svg class="a" style="left:1371px;top:591px" width="17" height="17" viewBox="0 0 17 17"><path d="M0.5 3.5h15.5 M5.5 3.5l.4-2.3h4.8l.4 2.3 M2.2 3.5V15.5h12.2V3.5" fill="none" stroke="#1a63f0" stroke-width="1.4"/><path d="M6.8 7v6.5 M9.8 7v6.5" stroke="#1a63f0" stroke-width="1.3"/></svg>
<svg class="a" style="left:1400px;top:590px" width="16" height="18" viewBox="0 0 16 18"><path d="M8 1.2c-1.3 1-2.6 1.7-6.3 2.3v5.8c0 3.8 2.8 6.3 6.3 8 3.5-1.7 6.3-4.2 6.3-8V3.5C10.6 2.9 9.3 2.2 8 1.2z" fill="none" stroke="#1a63f0" stroke-width="1.3"/><path d="M4.5 8.6l2.8 2.6 4.2-4.6" fill="none" stroke="#1a63f0" stroke-width="1.3"/></svg>
<svg class="a" style="left:1324px;top:630px" width="5" height="13" viewBox="0 0 5 13"><path d="M1.3 1.2l2.3 1.3 M1 4.8l2.3 1.3" stroke="#111" stroke-width="1.5"/><path d="M3.6 7.5L1.5 12.5" stroke="#111" stroke-width="1.3"/></svg>
<svg class="a" style="left:1342px;top:630px" width="20" height="14" viewBox="0 0 20 14"><path d="M1 7c2.5-4 5.5-5.8 9-5.8s6.5 1.8 9 5.8c-2.5 4-5.5 5.8-9 5.8S3.5 11 1 7z" fill="none" stroke="#1a63f0" stroke-width="1.3"/><circle cx="10" cy="7" r="3.4" fill="none" stroke="#1a63f0" stroke-width="1.3"/></svg>
<svg class="a" style="left:1371px;top:629px" width="17" height="17" viewBox="0 0 17 17"><path d="M0.5 3.5h15.5 M5.5 3.5l.4-2.3h4.8l.4 2.3 M2.2 3.5V15.5h12.2V3.5" fill="none" stroke="#1a63f0" stroke-width="1.4"/><path d="M6.8 7v6.5 M9.8 7v6.5" stroke="#1a63f0" stroke-width="1.3"/></svg>
<svg class="a" style="left:1400px;top:628px" width="16" height="18" viewBox="0 0 16 18"><path d="M8 1.2c-1.3 1-2.6 1.7-6.3 2.3v5.8c0 3.8 2.8 6.3 6.3 8 3.5-1.7 6.3-4.2 6.3-8V3.5C10.6 2.9 9.3 2.2 8 1.2z" fill="none" stroke="#1a63f0" stroke-width="1.3"/><path d="M4.5 8.6l2.8 2.6 4.2-4.6" fill="none" stroke="#1a63f0" stroke-width="1.3"/></svg>
<svg class="a" style="left:1324px;top:668px" width="5" height="13" viewBox="0 0 5 13"><path d="M1.3 1.2l2.3 1.3 M1 4.8l2.3 1.3" stroke="#111" stroke-width="1.5"/><path d="M3.6 7.5L1.5 12.5" stroke="#111" stroke-width="1.3"/></svg>
<svg class="a" style="left:1342px;top:668px" width="20" height="14" viewBox="0 0 20 14"><path d="M1 7c2.5-4 5.5-5.8 9-5.8s6.5 1.8 9 5.8c-2.5 4-5.5 5.8-9 5.8S3.5 11 1 7z" fill="none" stroke="#1a63f0" stroke-width="1.3"/><circle cx="10" cy="7" r="3.4" fill="none" stroke="#1a63f0" stroke-width="1.3"/></svg>
<svg class="a" style="left:1371px;top:667px" width="17" height="17" viewBox="0 0 17 17"><path d="M0.5 3.5h15.5 M5.5 3.5l.4-2.3h4.8l.4 2.3 M2.2 3.5V15.5h12.2V3.5" fill="none" stroke="#1a63f0" stroke-width="1.4"/><path d="M6.8 7v6.5 M9.8 7v6.5" stroke="#1a63f0" stroke-width="1.3"/></svg>
<svg class="a" style="left:1400px;top:666px" width="16" height="18" viewBox="0 0 16 18"><path d="M8 1.2c-1.3 1-2.6 1.7-6.3 2.3v5.8c0 3.8 2.8 6.3 6.3 8 3.5-1.7 6.3-4.2 6.3-8V3.5C10.6 2.9 9.3 2.2 8 1.2z" fill="none" stroke="#1a63f0" stroke-width="1.3"/><path d="M4.5 8.6l2.8 2.6 4.2-4.6" fill="none" stroke="#1a63f0" stroke-width="1.3"/></svg>
<svg class="a" style="left:1324px;top:706px" width="5" height="13" viewBox="0 0 5 13"><path d="M1.3 1.2l2.3 1.3 M1 4.8l2.3 1.3" stroke="#111" stroke-width="1.5"/><path d="M3.6 7.5L1.5 12.5" stroke="#111" stroke-width="1.3"/></svg>
<svg class="a" style="left:1342px;top:706px" width="20" height="14" viewBox="0 0 20 14"><path d="M1 7c2.5-4 5.5-5.8 9-5.8s6.5 1.8 9 5.8c-2.5 4-5.5 5.8-9 5.8S3.5 11 1 7z" fill="none" stroke="#1a63f0" stroke-width="1.3"/><circle cx="10" cy="7" r="3.4" fill="none" stroke="#1a63f0" stroke-width="1.3"/></svg>
<svg class="a" style="left:1371px;top:705px" width="17" height="17" viewBox="0 0 17 17"><path d="M0.5 3.5h15.5 M5.5 3.5l.4-2.3h4.8l.4 2.3 M2.2 3.5V15.5h12.2V3.5" fill="none" stroke="#1a63f0" stroke-width="1.4"/><path d="M6.8 7v6.5 M9.8 7v6.5" stroke="#1a63f0" stroke-width="1.3"/></svg>
<svg class="a" style="left:1400px;top:704px" width="16" height="18" viewBox="0 0 16 18"><path d="M8 1.2c-1.3 1-2.6 1.7-6.3 2.3v5.8c0 3.8 2.8 6.3 6.3 8 3.5-1.7 6.3-4.2 6.3-8V3.5C10.6 2.9 9.3 2.2 8 1.2z" fill="none" stroke="#1a63f0" stroke-width="1.3"/><path d="M4.5 8.6l2.8 2.6 4.2-4.6" fill="none" stroke="#1a63f0" stroke-width="1.3"/></svg>
<svg class="a" style="left:1324px;top:744px" width="5" height="13" viewBox="0 0 5 13"><path d="M1.3 1.2l2.3 1.3 M1 4.8l2.3 1.3" stroke="#111" stroke-width="1.5"/><path d="M3.6 7.5L1.5 12.5" stroke="#111" stroke-width="1.3"/></svg>
<svg class="a" style="left:1342px;top:744px" width="20" height="14" viewBox="0 0 20 14"><path d="M1 7c2.5-4 5.5-5.8 9-5.8s6.5 1.8 9 5.8c-2.5 4-5.5 5.8-9 5.8S3.5 11 1 7z" fill="none" stroke="#1a63f0" stroke-width="1.3"/><circle cx="10" cy="7" r="3.4" fill="none" stroke="#1a63f0" stroke-width="1.3"/></svg>
<svg class="a" style="left:1371px;top:743px" width="17" height="17" viewBox="0 0 17 17"><path d="M0.5 3.5h15.5 M5.5 3.5l.4-2.3h4.8l.4 2.3 M2.2 3.5V15.5h12.2V3.5" fill="none" stroke="#1a63f0" stroke-width="1.4"/><path d="M6.8 7v6.5 M9.8 7v6.5" stroke="#1a63f0" stroke-width="1.3"/></svg>
<svg class="a" style="left:1400px;top:742px" width="16" height="18" viewBox="0 0 16 18"><path d="M8 1.2c-1.3 1-2.6 1.7-6.3 2.3v5.8c0 3.8 2.8 6.3 6.3 8 3.5-1.7 6.3-4.2 6.3-8V3.5C10.6 2.9 9.3 2.2 8 1.2z" fill="none" stroke="#1a63f0" stroke-width="1.3"/><path d="M4.5 8.6l2.8 2.6 4.2-4.6" fill="none" stroke="#1a63f0" stroke-width="1.3"/></svg>
<div class="a" style="left:519px;top:771px;width:928px;height:6px;background:#fff"></div>
<div class="a" style="left:519px;top:771px;width:757px;height:6px;background:#dcdcdc;border-radius:3px"></div>
<div class="a" style="left:1327px;top:770px;width:1px;height:7px;background:#e8eaf0"></div>
<div class="a" style="left:518px;top:777px;width:930px;height:1px;background:#ebeef5"></div>
<div class="a" style="left:1225px;top:272px;width:115px;height:62px;background:#fff;border:1px solid #ebeef5;border-radius:4px;box-shadow:0 2px 12px rgba(0,0,0,.1)"></div>
<div class="a" style="left:1281px;top:266px;width:12px;height:12px;background:#fff;transform:rotate(45deg);border-left:1px solid #ebeef5;border-top:1px solid #ebeef5"></div>
<div class="a" style="left:1226px;top:273px;width:113px;height:8px;background:#fff"></div>
<div class="t" style="left:1235px;top:282.4px;font-size:12px;color:#606266;">新增条目</div>
<div class="t" style="left:1235px;top:310.4px;font-size:12px;color:#606266;">Excel导入条目</div>
<div class="a" style="left:1453px;top:319px;width:300px;height:150px;background:#f8f8f9"></div>
<svg class="a" style="left:1470px;top:349px" width="106" height="90" viewBox="0 0 106 90"><path d="M0 16a16 16 0 0 1 16-16h43a16 16 0 0 1 13 7l6 9H0z" fill="#ffb74d"/><path d="M0 15h92a14 14 0 0 1 14 14v47a14 14 0 0 1-14 14H16A16 16 0 0 1 0 74z" fill="#ffd54f"/></svg>
<div class="a" style="left:1673px;top:380px;width:70px;height:28px;background:#ecf5ff;border:1px solid #b3d8ff;border-radius:3px"></div>
<div class="t" style="left:1685px;top:387.4px;font-size:12px;color:#409eff;font-weight:bold;-webkit-text-stroke:0">编辑信息</div>
<div class="t" style="left:1464px;top:481.3px;font-size:14px;color:#111;font-weight:bold;-webkit-text-stroke:0">测试企业</div>
<div class="t" style="left:777px;top:816.9px;font-size:13px;color:#333;">共 11 条</div>
<div class="a" style="left:838px;top:810px;width:100px;height:28px;border:1px solid #dcdfe6;border-radius:3px"></div>
<div class="t" style="left:866px;top:816.9px;font-size:13px;color:#333;">50条/页</div>
<div class="a" style="left:922px;top:823px;width:0;height:0;border-left:3.5px solid transparent;border-right:3.5px solid transparent;border-top:4px solid #c0c4cc"></div>
<div class="a" style="left:958px;top:810px;width:30px;height:28px;background:#f4f4f5;border-radius:2px"></div>
<svg class="a" style="left:968px;top:818px" width="8" height="12" viewBox="0 0 8 12"><path d="M6 1L1.5 6 6 11" fill="none" stroke="#c0c4cc" stroke-width="1.3"/></svg>
<div class="a" style="left:998px;top:810px;width:30px;height:28px;background:#409eff;border-radius:2px"></div>
<div class="t" style="left:1009px;top:816.9px;font-size:13px;color:#fff;font-weight:bold;-webkit-text-stroke:0">1</div>
<div class="a" style="left:1038px;top:810px;width:30px;height:28px;background:#f4f4f5;border-radius:2px"></div>
<svg class="a" style="left:1049px;top:818px" width="8" height="12" viewBox="0 0 8 12"><path d="M2 1l4.5 5L2 11" fill="none" stroke="#c0c4cc" stroke-width="1.3"/></svg>
<div class="t" style="left:1097px;top:816.9px;font-size:13px;color:#333;">前往</div>
<div class="a" style="left:1127px;top:810px;width:46px;height:28px;border:1px solid #dcdfe6;border-radius:3px"></div>
<div class="t" style="left:1146px;top:816.9px;font-size:13px;color:#333;">1</div>
<div class="t" style="left:1177px;top:816.9px;font-size:13px;color:#333;">页</div>
<div class="a" style="left:1532px;top:915px;width:1px;height:1px;background:#9a9a9a"></div>
<div class="a" style="left:1539px;top:915px;width:1px;height:1px;background:#9a9a9a"></div>
<div class="a" style="left:1546px;top:915px;width:1px;height:1px;background:#9a9a9a"></div>
<div class="a" style="left:1553px;top:915px;width:1px;height:1px;background:#9a9a9a"></div>
<div class="a" style="left:1565px;top:915px;width:5px;height:1px;background:#9a9a9a"></div>
<div class="a" style="left:1599px;top:915px;width:2px;height:1px;background:#9a9a9a"></div>
<div class="a" style="left:1624px;top:915px;width:2px;height:1px;background:#9a9a9a"></div>
<div class="a" style="left:1763px;top:127px;width:37px;height:789px;background:linear-gradient(90deg,#aeb2b8,#cdd1d7 6px,#dde1e8 14px,#e3e7ee 22px)"></div>
<div class="a" style="left:1763px;top:138px;width:1px;height:778px;background:#707070"></div>
<div class="a" style="left:1752px;top:136px;width:6px;height:2px;background:#666"></div>
<div class="a" style="left:1785px;top:151px;width:15px;height:2px;background:#999"></div>
<svg class="a" style="left:1784px;top:173px" width="18" height="16" viewBox="0 0 18 16"><path d="M1 14h17 M3 12l10-10 3 3-10 10H2z" fill="none" stroke="#333" stroke-width="1.1"/></svg>
<div class="t" style="left:1780px;top:193.4px;font-size:12px;color:#222;">样式</div>
<svg class="a" style="left:1784px;top:222px" width="18" height="18" viewBox="0 0 18 18"><path d="M1.5 1.5l4.5 13 2.5-5 5 5 2-2-5-5 5-2.5z" fill="none" stroke="#333" stroke-width="1.1"/></svg>
<div class="t" style="left:1780px;top:244.4px;font-size:12px;color:#222;">选择</div>
<svg class="a" style="left:1784px;top:275px" width="18" height="16" viewBox="0 0 18 16"><path d="M0 4h18 M0 11h18" fill="none" stroke="#333" stroke-width="1.1"/><circle cx="4" cy="4" r="2.2" fill="#e3e7ee" stroke="#333" stroke-width="1.1"/><circle cx="10" cy="11" r="2.2" fill="#e3e7ee" stroke="#333" stroke-width="1.1"/></svg>
<div class="t" style="left:1780px;top:297.4px;font-size:12px;color:#222;">属性</div>
<svg class="a" style="left:1784px;top:328px" width="18" height="16" viewBox="0 0 18 16"><path d="M3 2h12l2 4v9H1V6z M6 12c0-3 2-5 4-6 M9 12c0-3 2-4 4-5" fill="none" stroke="#333" stroke-width="1.1"/></svg>
<div class="t" style="left:1780px;top:348.4px;font-size:12px;color:#222;">素材</div>
<svg class="a" style="left:1784px;top:380px" width="18" height="16" viewBox="0 0 18 16"><path d="M2 14l9-9 2 2-9 9z M12 1v3 M15 4h3 M14 8h2" fill="none" stroke="#333" stroke-width="1.1"/></svg>
<div class="t" style="left:1780px;top:400.4px;font-size:12px;color:#222;">美化</div>
<svg class="a" style="left:1784px;top:431px" width="18" height="18" viewBox="0 0 18 18"><circle cx="9" cy="9" r="8" fill="none" stroke="#333" stroke-width="1.1"/><path d="M6.5 7a2.5 2.5 0 1 1 3.5 2.3V11 M9 13v1.5" fill="none" stroke="#333" stroke-width="1.1"/></svg>
<div class="t" style="left:1780px;top:452.4px;font-size:12px;color:#222;">帮助</div>
<svg class="a" style="left:1784px;top:483px" width="18" height="17" viewBox="0 0 18 17"><path d="M5 1L1 4l2 4 2-1v9h9V7l2 1 2-4-4-3-2 2H7z" fill="none" stroke="#333" stroke-width="1.1"/></svg>
<div class="t" style="left:1780px;top:504.4px;font-size:12px;color:#222;">模板</div>
<svg class="a" style="left:1784px;top:540px" width="18" height="6" viewBox="0 0 18 6"><circle cx="3" cy="3" r="1.6" fill="none" stroke="#555"/><circle cx="9" cy="3" r="1.6" fill="none" stroke="#555"/><circle cx="15" cy="3" r="1.6" fill="none" stroke="#555"/></svg>
<div class="t" style="left:1780px;top:556.4px;font-size:12px;color:#222;">设置</div>
</body></html>
